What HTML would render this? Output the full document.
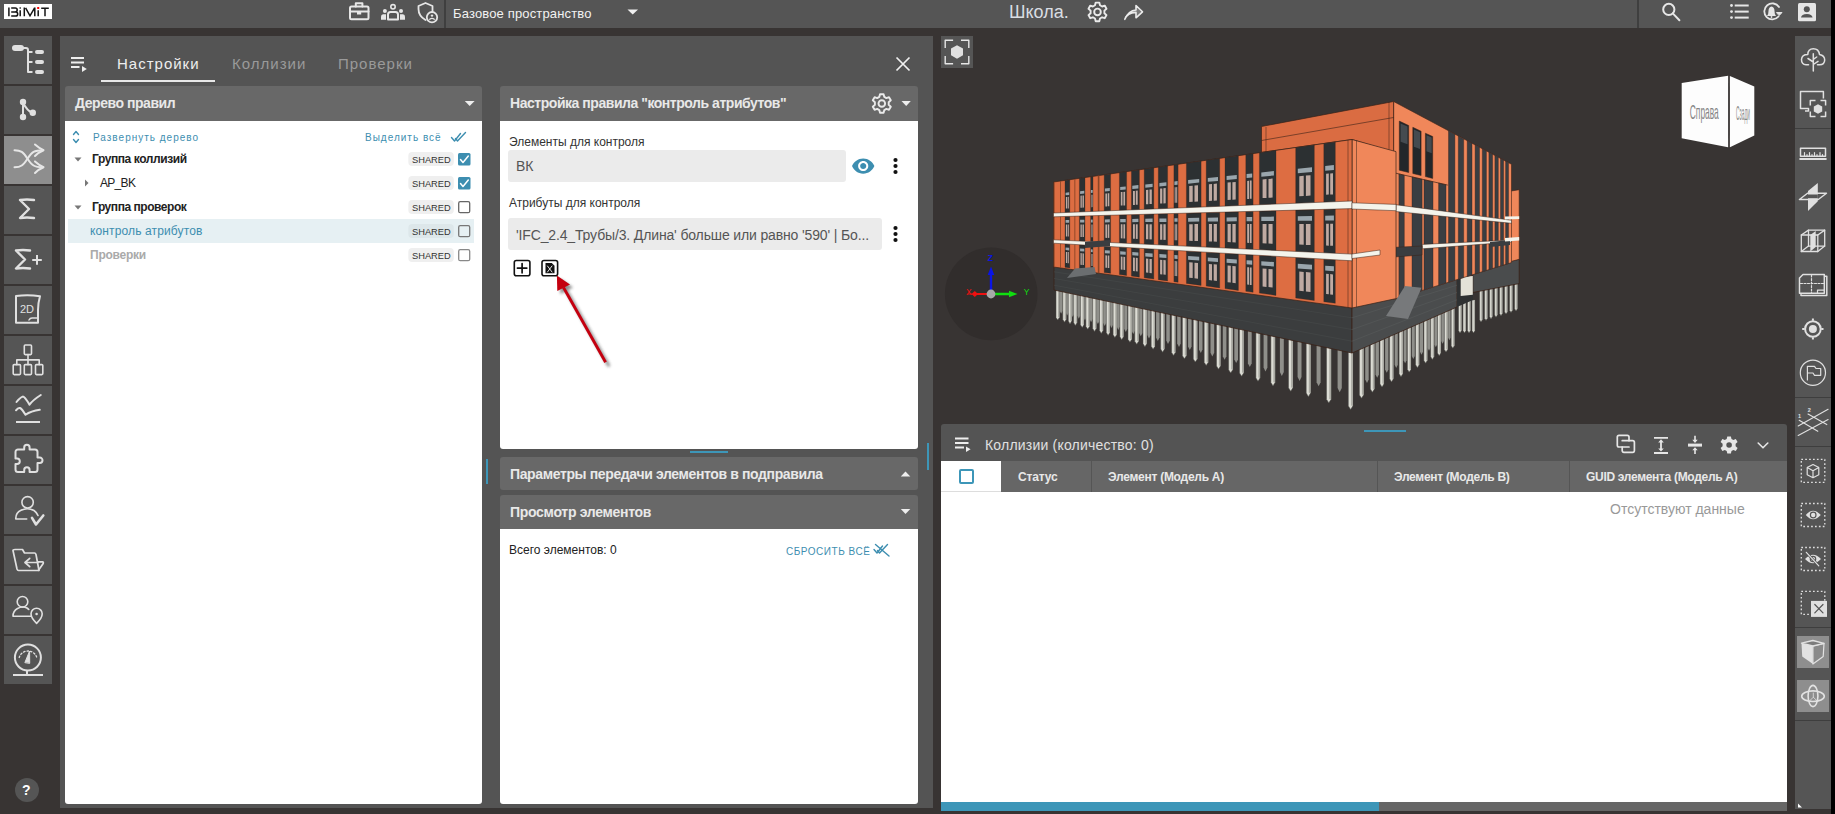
<!DOCTYPE html>
<html><head><meta charset="utf-8">
<style>
*{box-sizing:border-box;margin:0;padding:0}
html,body{width:1835px;height:814px;overflow:hidden;background:#383433;font-family:"Liberation Sans",sans-serif}
.a{position:absolute}
.t{position:absolute;white-space:nowrap;line-height:1}
svg{position:absolute;overflow:visible}
</style></head><body>
<!-- TOP BAR -->
<div class="a" style="left:0;top:0;width:1831px;height:28px;background:#555555"></div>
<div class="a" style="left:444px;top:0;width:2px;height:28px;background:#3f3f3f"></div>
<div class="a" style="left:1637px;top:0;width:2px;height:28px;background:#3f3f3f"></div>
<div class="a" style="left:4px;top:4px;width:48px;height:15px;background:#fff"></div>
<svg width="60" height="24" style="left:0;top:0" viewBox="0 0 60 24" fill="none" stroke="#151515" stroke-width="1.5" stroke-linecap="butt">
<path d="M8.9 7.5 V16.2 M11.2 8.1 H15.2 Q17.2 8.1 17.2 10 Q17.2 11.9 15.2 11.9 H11.2 M11.2 11.9 H15.6 Q17.7 11.9 17.7 14 Q17.7 16.1 15.6 16.1 H11.2 M20.2 10.2 V16.2 M24.3 7.5 V16.2 M25.6 7.8 L30 15.8 L34.6 7.8 M34.8 7.5 V16.2 M38.2 10.2 V16.2 M41.2 8.3 H48.8 M45 8.3 V16.2"/>
<rect x="19.5" y="7.3" width="1.4" height="1.4" fill="#151515" stroke="none"/>
<rect x="37.2" y="7" width="2" height="2" fill="#f00" stroke="none"/>
</svg>
<div class="t" id="tx_space" style="left:453px;top:7px;font-size:13px;color:#f2f2f2;letter-spacing:0.15px">Базовое пространство</div>
<div class="t" id="tx_school" style="left:1009px;top:3px;font-size:18px;color:#d9dde2">Школа.</div>

<!-- LEFT SIDEBAR -->
<div class="a" style="left:4px;top:36px;width:48px;height:48px;background:#555"></div>
<div class="a" style="left:4px;top:86px;width:48px;height:48px;background:#555"></div>
<div class="a" style="left:4px;top:136px;width:48px;height:48px;background:#8e8e8e"></div>
<div class="a" style="left:4px;top:186px;width:48px;height:48px;background:#555"></div>
<div class="a" style="left:4px;top:236px;width:48px;height:48px;background:#555"></div>
<div class="a" style="left:4px;top:286px;width:48px;height:48px;background:#555"></div>
<div class="a" style="left:4px;top:336px;width:48px;height:48px;background:#555"></div>
<div class="a" style="left:4px;top:386px;width:48px;height:48px;background:#555"></div>
<div class="a" style="left:4px;top:436px;width:48px;height:48px;background:#555"></div>
<div class="a" style="left:4px;top:486px;width:48px;height:48px;background:#555"></div>
<div class="a" style="left:4px;top:536px;width:48px;height:48px;background:#555"></div>
<div class="a" style="left:4px;top:586px;width:48px;height:48px;background:#555"></div>
<div class="a" style="left:4px;top:636px;width:48px;height:48px;background:#555"></div>
<div class="a" style="left:15px;top:778px;width:24px;height:24px;border-radius:50%;background:#555"></div>
<div class="t" style="left:22px;top:783px;font-size:14px;font-weight:bold;color:#fff">?</div>

<!-- MAIN PANEL -->
<div class="a" style="left:60px;top:36px;width:873px;height:772px;background:#545454"></div>
<div class="t" id="tx_tab1" style="left:117px;top:56px;font-size:15px;color:#eeeeee;letter-spacing:1px">Настройки</div>
<div class="t" id="tx_tab2" style="left:232px;top:56px;font-size:15px;color:#9a9a9a;letter-spacing:1px">Коллизии</div>
<div class="t" id="tx_tab3" style="left:338px;top:56px;font-size:15px;color:#9a9a9a;letter-spacing:1px">Проверки</div>
<div class="a" style="left:101px;top:80px;width:114px;height:2px;background:#e8e8e8"></div>

<!-- tree panel -->
<div class="a" style="left:65px;top:86px;width:417px;height:35px;background:#686868;border-radius:3px 3px 0 0"></div>
<div class="a" style="left:65px;top:121px;width:417px;height:683px;background:#fff;border-radius:0 0 3px 3px"></div>
<div class="t" id="tx_tree" style="left:75px;top:96px;font-size:14px;font-weight:bold;color:#e8e8e8;letter-spacing:-0.45px">Дерево правил</div>
<div class="t" id="tx_expand" style="left:93px;top:133px;font-size:10px;color:#3d8eb0;letter-spacing:1px">Развернуть дерево</div>
<div class="t" id="tx_selall" style="left:365px;top:133px;font-size:10px;color:#3d8eb0;letter-spacing:1px">Выделить всё</div>
<div class="a" style="left:68px;top:219px;width:406px;height:24px;background:#e6f0f3"></div>
<div class="t" id="tx_g1" style="left:92px;top:153px;font-size:12px;font-weight:bold;color:#222;letter-spacing:-0.42px">Группа коллизий</div>
<div class="t" id="tx_apbk" style="left:100px;top:177px;font-size:12px;color:#222;letter-spacing:-0.7px">AP_BK</div>
<div class="t" id="tx_g2" style="left:92px;top:201px;font-size:12px;font-weight:bold;color:#222;letter-spacing:-0.45px">Группа проверок</div>
<div class="t" id="tx_ctrl" style="left:90px;top:225px;font-size:12px;color:#3d8eb0;letter-spacing:0.13px">контроль атрибутов</div>
<div class="t" id="tx_prov" style="left:90px;top:249px;font-size:12px;font-weight:bold;color:#aaa;letter-spacing:-0.25px">Проверки</div>

<!-- middle panel -->
<div class="a" style="left:500px;top:86px;width:418px;height:35px;background:#686868;border-radius:3px 3px 0 0"></div>
<div class="a" style="left:500px;top:121px;width:418px;height:328px;background:#fff;border-radius:0 0 3px 3px"></div>
<div class="t" id="tx_rule" style="left:510px;top:96px;font-size:14px;font-weight:bold;color:#e8e8e8;letter-spacing:-0.46px">Настройка правила "контроль атрибутов"</div>
<div class="t" id="tx_el" style="left:509px;top:136px;font-size:12px;color:#333">Элементы для контроля</div>
<div class="a" style="left:508px;top:150px;width:338px;height:32px;background:#ebebeb;border-radius:3px"></div>
<div class="t" id="tx_vk" style="left:516px;top:159px;font-size:14px;color:#555">ВК</div>
<div class="t" id="tx_attr" style="left:509px;top:197px;font-size:12px;color:#333">Атрибуты для контроля</div>
<div class="a" style="left:508px;top:218px;width:374px;height:32px;background:#ebebeb;border-radius:3px"></div>
<div class="t" id="tx_ifc" style="left:516px;top:228px;font-size:14px;color:#555;letter-spacing:-0.14px">'IFC_2.4_Трубы/3. Длина' больше или равно '590' | Бо...</div>

<div class="a" style="left:500px;top:457px;width:418px;height:33px;background:#686868;border-radius:3px"></div>
<div class="t" id="tx_param" style="left:510px;top:467px;font-size:14px;font-weight:bold;color:#e8e8e8;letter-spacing:-0.37px">Параметры передачи элементов в подправила</div>
<div class="a" style="left:500px;top:495px;width:418px;height:34px;background:#686868;border-radius:3px 3px 0 0"></div>
<div class="t" id="tx_view" style="left:510px;top:505px;font-size:14px;font-weight:bold;color:#e8e8e8;letter-spacing:-0.3px">Просмотр элементов</div>
<div class="a" style="left:500px;top:529px;width:418px;height:275px;background:#fff;border-radius:0 0 3px 3px"></div>
<div class="t" id="tx_total" style="left:509px;top:544px;font-size:12px;color:#222">Всего элементов: 0</div>
<div class="t" id="tx_reset" style="left:786px;top:547px;font-size:10px;color:#3d8eb0;letter-spacing:0.52px">СБРОСИТЬ ВСЁ</div>
<div class="a" style="left:690px;top:451px;width:38px;height:2px;background:#3d96b8"></div>
<div class="a" style="left:486px;top:459px;width:2px;height:25px;background:#3d96b8"></div>
<div class="a" style="left:927px;top:443px;width:2px;height:27px;background:#3d96b8"></div>

<!-- 3D view button -->
<div class="a" style="left:941px;top:36px;width:32px;height:32px;background:#555"></div>

<!-- BUILDING -->
<svg width="1835" height="814" style="left:0;top:0" viewBox="0 0 1835 814"><path d="M1059.6 287.5 V310.7 L1061.1 313.8 L1062.6 310.7 V287.5 Z" fill="#8f8f8a"/><path d="M1065.7 288.8 V312.4 L1067.2 315.5 L1068.8 312.4 V288.8 Z" fill="#8f8f8a"/><path d="M1071.2 290.0 V313.9 L1072.7 317.0 L1074.2 313.9 V290.0 Z" fill="#8f8f8a"/><path d="M1077.3 291.2 V315.6 L1078.8 318.7 L1080.3 315.6 V291.2 Z" fill="#8f8f8a"/><path d="M1083.4 292.5 V317.3 L1085.0 320.5 L1086.5 317.3 V292.5 Z" fill="#8f8f8a"/><path d="M1089.5 293.8 V319.1 L1091.1 322.2 L1092.7 319.1 V293.8 Z" fill="#8f8f8a"/><path d="M1096.3 295.3 V320.9 L1097.9 324.1 L1099.5 320.9 V295.3 Z" fill="#8f8f8a"/><path d="M1103.1 296.7 V322.8 L1104.7 326.0 L1106.3 322.8 V296.7 Z" fill="#8f8f8a"/><path d="M1109.9 298.2 V324.7 L1111.5 328.0 L1113.1 324.7 V298.2 Z" fill="#8f8f8a"/><path d="M1116.7 299.6 V326.6 L1118.3 329.9 L1119.9 326.6 V299.6 Z" fill="#8f8f8a"/><path d="M1124.2 301.2 V328.7 L1125.8 332.0 L1127.4 328.7 V301.2 Z" fill="#8f8f8a"/><path d="M1131.6 302.8 V330.8 L1133.3 334.1 L1135.0 330.8 V302.8 Z" fill="#8f8f8a"/><path d="M1139.1 304.4 V332.9 L1140.8 336.2 L1142.5 332.9 V304.4 Z" fill="#8f8f8a"/><path d="M1147.3 306.1 V335.1 L1149.0 338.5 L1150.7 335.1 V306.1 Z" fill="#8f8f8a"/><path d="M1156.1 308.0 V337.6 L1157.8 341.0 L1159.6 337.6 V308.0 Z" fill="#8f8f8a"/><path d="M1166.3 310.1 V340.4 L1168.0 343.9 L1169.8 340.4 V310.1 Z" fill="#8f8f8a"/><path d="M1177.2 312.4 V343.5 L1179.0 347.0 L1180.7 343.5 V312.4 Z" fill="#8f8f8a"/><path d="M1188.1 314.7 V346.5 L1189.8 350.0 L1191.6 346.5 V314.7 Z" fill="#8f8f8a"/><path d="M1199.0 317.0 V349.5 L1200.8 353.1 L1202.5 349.5 V317.0 Z" fill="#8f8f8a"/><path d="M1210.5 319.5 V352.7 L1212.3 356.4 L1214.2 352.7 V319.5 Z" fill="#8f8f8a"/><path d="M1222.8 322.1 V356.2 L1224.6 359.8 L1226.4 356.2 V322.1 Z" fill="#8f8f8a"/><path d="M1234.3 324.5 V359.4 L1236.2 363.1 L1238.0 359.4 V324.5 Z" fill="#8f8f8a"/><path d="M1247.9 327.4 V363.2 L1249.8 366.9 L1251.7 363.2 V327.4 Z" fill="#8f8f8a"/><path d="M1263.6 330.7 V367.5 L1265.5 371.4 L1267.4 367.5 V330.7 Z" fill="#8f8f8a"/><path d="M1279.9 334.2 V372.1 L1281.8 376.0 L1283.8 372.1 V334.2 Z" fill="#8f8f8a"/><path d="M1297.6 337.9 V377.0 L1299.6 381.0 L1301.5 377.0 V337.9 Z" fill="#8f8f8a"/><path d="M1316.6 341.9 V382.3 L1318.6 386.3 L1320.6 382.3 V341.9 Z" fill="#8f8f8a"/><path d="M1337.6 346.4 V388.1 L1339.7 392.3 L1341.8 388.1 V346.4 Z" fill="#8f8f8a"/><path d="M1056.0 288.8 V317.4 L1057.7 320.1 L1059.4 317.4 V288.8 Z" fill="#dcdcd4" stroke="#4a4a46" stroke-width="0.5"/><path d="M1058.0 288.8 V317.1 L1059.4 317.4 V288.8 Z" fill="#a9a9a2"/><path d="M1062.8 290.2 V319.5 L1064.5 322.2 L1066.2 319.5 V290.2 Z" fill="#dcdcd4" stroke="#4a4a46" stroke-width="0.5"/><path d="M1064.8 290.2 V319.1 L1066.2 319.5 V290.2 Z" fill="#a9a9a2"/><path d="M1068.3 291.4 V321.1 L1070.0 323.9 L1071.7 321.1 V291.4 Z" fill="#dcdcd4" stroke="#4a4a46" stroke-width="0.5"/><path d="M1070.3 291.4 V320.8 L1071.7 321.1 V291.4 Z" fill="#a9a9a2"/><path d="M1073.7 292.5 V322.7 L1075.4 325.5 L1077.1 322.7 V292.5 Z" fill="#dcdcd4" stroke="#4a4a46" stroke-width="0.5"/><path d="M1075.7 292.5 V322.4 L1077.1 322.7 V292.5 Z" fill="#a9a9a2"/><path d="M1080.4 294.0 V324.8 L1082.2 327.6 L1084.0 324.8 V294.0 Z" fill="#dcdcd4" stroke="#4a4a46" stroke-width="0.5"/><path d="M1082.6 294.0 V324.4 L1084.0 324.8 V294.0 Z" fill="#a9a9a2"/><path d="M1085.9 295.1 V326.5 L1087.7 329.3 L1089.5 326.5 V295.1 Z" fill="#dcdcd4" stroke="#4a4a46" stroke-width="0.5"/><path d="M1088.1 295.1 V326.1 L1089.5 326.5 V295.1 Z" fill="#a9a9a2"/><path d="M1092.7 296.6 V328.5 L1094.5 331.4 L1096.3 328.5 V296.6 Z" fill="#dcdcd4" stroke="#4a4a46" stroke-width="0.5"/><path d="M1094.9 296.6 V328.2 L1096.3 328.5 V296.6 Z" fill="#a9a9a2"/><path d="M1099.5 298.0 V330.6 L1101.3 333.4 L1103.1 330.6 V298.0 Z" fill="#dcdcd4" stroke="#4a4a46" stroke-width="0.5"/><path d="M1101.7 298.0 V330.2 L1103.1 330.6 V298.0 Z" fill="#a9a9a2"/><path d="M1106.3 299.4 V332.6 L1108.1 335.5 L1109.9 332.6 V299.4 Z" fill="#dcdcd4" stroke="#4a4a46" stroke-width="0.5"/><path d="M1108.5 299.4 V332.3 L1109.9 332.6 V299.4 Z" fill="#a9a9a2"/><path d="M1113.1 300.9 V334.7 L1114.9 337.6 L1116.7 334.7 V300.9 Z" fill="#dcdcd4" stroke="#4a4a46" stroke-width="0.5"/><path d="M1115.3 300.9 V334.3 L1116.7 334.7 V300.9 Z" fill="#a9a9a2"/><path d="M1119.9 302.3 V336.7 L1121.7 339.7 L1123.5 336.7 V302.3 Z" fill="#dcdcd4" stroke="#4a4a46" stroke-width="0.5"/><path d="M1122.1 302.3 V336.4 L1123.5 336.7 V302.3 Z" fill="#a9a9a2"/><path d="M1128.0 304.0 V339.2 L1129.9 342.2 L1131.8 339.2 V304.0 Z" fill="#dcdcd4" stroke="#4a4a46" stroke-width="0.5"/><path d="M1130.3 304.0 V338.8 L1131.8 339.2 V304.0 Z" fill="#a9a9a2"/><path d="M1134.8 305.5 V341.3 L1136.7 344.3 L1138.6 341.3 V305.5 Z" fill="#dcdcd4" stroke="#4a4a46" stroke-width="0.5"/><path d="M1137.1 305.5 V340.9 L1138.6 341.3 V305.5 Z" fill="#a9a9a2"/><path d="M1143.0 307.2 V343.7 L1144.9 346.8 L1146.8 343.7 V307.2 Z" fill="#dcdcd4" stroke="#4a4a46" stroke-width="0.5"/><path d="M1145.3 307.2 V343.4 L1146.8 343.7 V307.2 Z" fill="#a9a9a2"/><path d="M1151.2 309.0 V346.2 L1153.1 349.3 L1155.0 346.2 V309.0 Z" fill="#dcdcd4" stroke="#4a4a46" stroke-width="0.5"/><path d="M1153.5 309.0 V345.8 L1155.0 346.2 V309.0 Z" fill="#a9a9a2"/><path d="M1160.7 311.0 V349.1 L1162.6 352.2 L1164.5 349.1 V311.0 Z" fill="#dcdcd4" stroke="#4a4a46" stroke-width="0.5"/><path d="M1163.0 311.0 V348.7 L1164.5 349.1 V311.0 Z" fill="#a9a9a2"/><path d="M1171.6 313.3 V352.4 L1173.5 355.5 L1175.4 352.4 V313.3 Z" fill="#dcdcd4" stroke="#4a4a46" stroke-width="0.5"/><path d="M1173.9 313.3 V352.0 L1175.4 352.4 V313.3 Z" fill="#a9a9a2"/><path d="M1182.4 315.6 V355.7 L1184.4 358.8 L1186.4 355.7 V315.6 Z" fill="#dcdcd4" stroke="#4a4a46" stroke-width="0.5"/><path d="M1184.8 315.6 V355.3 L1186.4 355.7 V315.6 Z" fill="#a9a9a2"/><path d="M1193.3 317.9 V359.0 L1195.3 362.1 L1197.3 359.0 V317.9 Z" fill="#dcdcd4" stroke="#4a4a46" stroke-width="0.5"/><path d="M1195.7 317.9 V358.6 L1197.3 359.0 V317.9 Z" fill="#a9a9a2"/><path d="M1204.2 320.2 V362.3 L1206.2 365.5 L1208.2 362.3 V320.2 Z" fill="#dcdcd4" stroke="#4a4a46" stroke-width="0.5"/><path d="M1206.6 320.2 V361.9 L1208.2 362.3 V320.2 Z" fill="#a9a9a2"/><path d="M1216.5 322.8 V366.0 L1218.5 369.2 L1220.5 366.0 V322.8 Z" fill="#dcdcd4" stroke="#4a4a46" stroke-width="0.5"/><path d="M1218.9 322.8 V365.6 L1220.5 366.0 V322.8 Z" fill="#a9a9a2"/><path d="M1228.6 325.4 V369.7 L1230.7 373.0 L1232.8 369.7 V325.4 Z" fill="#dcdcd4" stroke="#4a4a46" stroke-width="0.5"/><path d="M1231.1 325.4 V369.3 L1232.8 369.7 V325.4 Z" fill="#a9a9a2"/><path d="M1239.5 327.7 V373.0 L1241.6 376.3 L1243.7 373.0 V327.7 Z" fill="#dcdcd4" stroke="#4a4a46" stroke-width="0.5"/><path d="M1242.0 327.7 V372.5 L1243.7 373.0 V327.7 Z" fill="#a9a9a2"/><path d="M1255.9 331.1 V377.9 L1258.0 381.3 L1260.1 377.9 V331.1 Z" fill="#dcdcd4" stroke="#4a4a46" stroke-width="0.5"/><path d="M1258.4 331.1 V377.5 L1260.1 377.9 V331.1 Z" fill="#a9a9a2"/><path d="M1270.9 334.3 V382.5 L1273.0 385.9 L1275.1 382.5 V334.3 Z" fill="#dcdcd4" stroke="#4a4a46" stroke-width="0.5"/><path d="M1273.4 334.3 V382.0 L1275.1 382.5 V334.3 Z" fill="#a9a9a2"/><path d="M1288.5 338.0 V387.8 L1290.7 391.3 L1292.9 387.8 V338.0 Z" fill="#dcdcd4" stroke="#4a4a46" stroke-width="0.5"/><path d="M1291.1 338.0 V387.4 L1292.9 387.8 V338.0 Z" fill="#a9a9a2"/><path d="M1306.2 341.8 V393.1 L1308.4 396.7 L1310.6 393.1 V341.8 Z" fill="#dcdcd4" stroke="#4a4a46" stroke-width="0.5"/><path d="M1308.8 341.8 V392.7 L1310.6 393.1 V341.8 Z" fill="#a9a9a2"/><path d="M1326.5 346.1 V399.3 L1328.8 402.9 L1331.1 399.3 V346.1 Z" fill="#dcdcd4" stroke="#4a4a46" stroke-width="0.5"/><path d="M1329.3 346.1 V398.9 L1331.1 399.3 V346.1 Z" fill="#a9a9a2"/><path d="M1348.3 350.7 V405.9 L1350.6 409.6 L1352.9 405.9 V350.7 Z" fill="#dcdcd4" stroke="#4a4a46" stroke-width="0.5"/><path d="M1351.1 350.7 V405.4 L1352.9 405.9 V350.7 Z" fill="#a9a9a2"/><path d="M1365.2 342.5 V379.6 L1367.0 383.1 L1368.7 379.6 V342.5 Z" fill="#8f8f8a"/><path d="M1375.5 338.0 V374.4 L1377.2 377.8 L1378.9 374.4 V338.0 Z" fill="#8f8f8a"/><path d="M1385.1 333.8 V369.5 L1386.8 372.8 L1388.4 369.5 V333.8 Z" fill="#8f8f8a"/><path d="M1394.7 329.6 V364.7 L1396.2 367.9 L1397.8 364.7 V329.6 Z" fill="#8f8f8a"/><path d="M1403.6 325.7 V360.2 L1405.1 363.3 L1406.6 360.2 V325.7 Z" fill="#8f8f8a"/><path d="M1411.8 322.1 V356.0 L1413.3 359.0 L1414.8 356.0 V322.1 Z" fill="#8f8f8a"/><path d="M1420.0 318.6 V351.8 L1421.5 354.7 L1423.0 351.8 V318.6 Z" fill="#8f8f8a"/><path d="M1427.6 315.3 V347.9 L1429.0 350.8 L1430.4 347.9 V315.3 Z" fill="#8f8f8a"/><path d="M1434.4 312.3 V344.5 L1435.8 347.3 L1437.2 344.5 V312.3 Z" fill="#8f8f8a"/><path d="M1441.2 309.3 V341.0 L1442.6 343.7 L1444.0 341.0 V309.3 Z" fill="#8f8f8a"/><path d="M1448.1 306.3 V337.5 L1449.4 340.2 L1450.7 337.5 V306.3 Z" fill="#8f8f8a"/><path d="M1359.4 346.8 V395.0 L1361.5 398.3 L1363.6 395.0 V346.8 Z" fill="#dcdcd4" stroke="#4a4a46" stroke-width="0.5"/><path d="M1361.9 346.8 V394.6 L1363.6 395.0 V346.8 Z" fill="#a9a9a2"/><path d="M1370.4 342.1 V389.1 L1372.4 392.3 L1374.4 389.1 V342.1 Z" fill="#dcdcd4" stroke="#4a4a46" stroke-width="0.5"/><path d="M1372.8 342.1 V388.7 L1374.4 389.1 V342.1 Z" fill="#a9a9a2"/><path d="M1380.0 337.9 V383.9 L1382.0 387.1 L1384.0 383.9 V337.9 Z" fill="#dcdcd4" stroke="#4a4a46" stroke-width="0.5"/><path d="M1382.4 337.9 V383.5 L1384.0 383.9 V337.9 Z" fill="#a9a9a2"/><path d="M1389.6 333.7 V378.8 L1391.5 381.9 L1393.4 378.8 V333.7 Z" fill="#dcdcd4" stroke="#4a4a46" stroke-width="0.5"/><path d="M1391.9 333.7 V378.4 L1393.4 378.8 V333.7 Z" fill="#a9a9a2"/><path d="M1399.1 329.5 V373.7 L1401.0 376.7 L1402.9 373.7 V329.5 Z" fill="#dcdcd4" stroke="#4a4a46" stroke-width="0.5"/><path d="M1401.4 329.5 V373.3 L1402.9 373.7 V329.5 Z" fill="#a9a9a2"/><path d="M1407.4 325.9 V369.3 L1409.2 372.2 L1411.0 369.3 V325.9 Z" fill="#dcdcd4" stroke="#4a4a46" stroke-width="0.5"/><path d="M1409.6 325.9 V368.9 L1411.0 369.3 V325.9 Z" fill="#a9a9a2"/><path d="M1415.6 322.3 V364.8 L1417.4 367.7 L1419.2 364.8 V322.3 Z" fill="#dcdcd4" stroke="#4a4a46" stroke-width="0.5"/><path d="M1417.8 322.3 V364.5 L1419.2 364.8 V322.3 Z" fill="#a9a9a2"/><path d="M1423.9 318.8 V360.4 L1425.6 363.2 L1427.3 360.4 V318.8 Z" fill="#dcdcd4" stroke="#4a4a46" stroke-width="0.5"/><path d="M1425.9 318.8 V360.0 L1427.3 360.4 V318.8 Z" fill="#a9a9a2"/><path d="M1430.7 315.8 V356.7 L1432.4 359.5 L1434.1 356.7 V315.8 Z" fill="#dcdcd4" stroke="#4a4a46" stroke-width="0.5"/><path d="M1432.7 315.8 V356.4 L1434.1 356.7 V315.8 Z" fill="#a9a9a2"/><path d="M1437.5 312.8 V353.1 L1439.2 355.7 L1440.9 353.1 V312.8 Z" fill="#dcdcd4" stroke="#4a4a46" stroke-width="0.5"/><path d="M1439.5 312.8 V352.7 L1440.9 353.1 V312.8 Z" fill="#a9a9a2"/><path d="M1444.3 309.8 V349.4 L1446.0 352.0 L1447.7 349.4 V309.8 Z" fill="#dcdcd4" stroke="#4a4a46" stroke-width="0.5"/><path d="M1446.3 309.8 V349.0 L1447.7 349.4 V309.8 Z" fill="#a9a9a2"/><path d="M1451.2 306.8 V345.7 L1452.8 348.3 L1454.4 345.7 V306.8 Z" fill="#dcdcd4" stroke="#4a4a46" stroke-width="0.5"/><path d="M1453.1 306.8 V345.4 L1454.4 345.7 V306.8 Z" fill="#a9a9a2"/><path d="M1458.5 300.0 V330.6 L1460.0 333.0 L1461.5 330.6 V300.0 Z" fill="#dcdcd4" stroke="#4a4a46" stroke-width="0.5"/><path d="M1460.3 300.0 V330.3 L1461.5 330.6 V300.0 Z" fill="#a9a9a2"/><path d="M1463.0 300.0 V330.6 L1464.5 333.0 L1466.0 330.6 V300.0 Z" fill="#dcdcd4" stroke="#4a4a46" stroke-width="0.5"/><path d="M1464.8 300.0 V330.3 L1466.0 330.6 V300.0 Z" fill="#a9a9a2"/><path d="M1467.5 300.0 V330.6 L1469.0 333.0 L1470.5 330.6 V300.0 Z" fill="#dcdcd4" stroke="#4a4a46" stroke-width="0.5"/><path d="M1469.3 300.0 V330.3 L1470.5 330.6 V300.0 Z" fill="#a9a9a2"/><path d="M1472.0 300.0 V330.6 L1473.5 333.0 L1475.0 330.6 V300.0 Z" fill="#dcdcd4" stroke="#4a4a46" stroke-width="0.5"/><path d="M1473.8 300.0 V330.3 L1475.0 330.6 V300.0 Z" fill="#a9a9a2"/><path d="M1479.6 290.0 V319.8 L1481.0 322.0 L1482.4 319.8 V290.0 Z" fill="#dcdcd4" stroke="#4a4a46" stroke-width="0.5"/><path d="M1481.3 290.0 V319.5 L1482.4 319.8 V290.0 Z" fill="#a9a9a2"/><path d="M1484.6 288.9 V318.2 L1486.0 320.4 L1487.4 318.2 V288.9 Z" fill="#dcdcd4" stroke="#4a4a46" stroke-width="0.5"/><path d="M1486.3 288.9 V317.9 L1487.4 318.2 V288.9 Z" fill="#a9a9a2"/><path d="M1489.6 287.7 V316.6 L1491.0 318.9 L1492.4 316.6 V287.7 Z" fill="#dcdcd4" stroke="#4a4a46" stroke-width="0.5"/><path d="M1491.3 287.7 V316.3 L1492.4 316.6 V287.7 Z" fill="#a9a9a2"/><path d="M1494.6 286.6 V315.0 L1496.0 317.3 L1497.4 315.0 V286.6 Z" fill="#dcdcd4" stroke="#4a4a46" stroke-width="0.5"/><path d="M1496.3 286.6 V314.8 L1497.4 315.0 V286.6 Z" fill="#a9a9a2"/><path d="M1499.6 285.4 V313.5 L1501.0 315.7 L1502.4 313.5 V285.4 Z" fill="#dcdcd4" stroke="#4a4a46" stroke-width="0.5"/><path d="M1501.3 285.4 V313.2 L1502.4 313.5 V285.4 Z" fill="#a9a9a2"/><path d="M1504.6 284.3 V311.9 L1506.0 314.1 L1507.4 311.9 V284.3 Z" fill="#dcdcd4" stroke="#4a4a46" stroke-width="0.5"/><path d="M1506.3 284.3 V311.6 L1507.4 311.9 V284.3 Z" fill="#a9a9a2"/><path d="M1509.6 283.1 V310.3 L1511.0 312.6 L1512.4 310.3 V283.1 Z" fill="#dcdcd4" stroke="#4a4a46" stroke-width="0.5"/><path d="M1511.3 283.1 V310.1 L1512.4 310.3 V283.1 Z" fill="#a9a9a2"/><path d="M1514.6 282.0 V308.8 L1516.0 311.0 L1517.4 308.8 V282.0 Z" fill="#dcdcd4" stroke="#4a4a46" stroke-width="0.5"/><path d="M1516.3 282.0 V308.5 L1517.4 308.8 V282.0 Z" fill="#a9a9a2"/><polygon points="1054.0,265.0 1352.0,306.0 1352.0,353.0 1054.0,290.0" fill="#3b3d3e" stroke="#3a2218" stroke-width="0.8"/><polygon points="1352.0,306.0 1457.0,278.0 1457.0,307.0 1352.0,353.0" fill="#4a4c4d" stroke="#3a2218" stroke-width="0.8"/><line x1="1054.0" y1="271.8" x2="1352.0" y2="317.8" stroke="#47494a" stroke-width="0.6"/><line x1="1352.0" y1="317.8" x2="1457.0" y2="285.2" stroke="#575a5b" stroke-width="0.6"/><line x1="1054.0" y1="278.5" x2="1352.0" y2="329.5" stroke="#47494a" stroke-width="0.6"/><line x1="1352.0" y1="329.5" x2="1457.0" y2="292.5" stroke="#575a5b" stroke-width="0.6"/><line x1="1054.0" y1="285.2" x2="1352.0" y2="341.2" stroke="#47494a" stroke-width="0.6"/><line x1="1352.0" y1="341.2" x2="1457.0" y2="299.8" stroke="#575a5b" stroke-width="0.6"/><polygon points="1457.0,278.0 1473.0,276.0 1473.0,300.0 1457.0,307.0" fill="#2f3132"/><polygon points="1472.8,268.0 1519.2,259.3 1519.2,283.6 1472.8,292.5" fill="#4a4c4d" stroke="#3a2218" stroke-width="0.8"/><polygon points="1460.7,277.0 1472.8,276.0 1472.8,294.7 1460.7,296.0" fill="#e4e2d8"/><polygon points="1505.0,192.0 1519.2,189.7 1519.2,259.3 1505.0,263.0" fill="#f0875a" stroke="#3a2218" stroke-width="0.6"/><polygon points="1393.6,101.5 1511.5,164.3 1511.5,262.6 1393.6,299.4" fill="#f0875a" stroke="#3a2218" stroke-width="0.6"/><polygon points="1398.9,173.9 1404.3,175.2 1404.3,296.0 1398.9,297.8" fill="#3a3e42" stroke="#3a2218" stroke-width="0.4"/><polygon points="1412.0,176.9 1422.1,179.2 1422.1,290.5 1412.0,293.7" fill="#3a3e42" stroke="#3a2218" stroke-width="0.4"/><polygon points="1424.0,179.7 1433.0,181.7 1433.0,287.1 1424.0,289.9" fill="#3a3e42" stroke="#3a2218" stroke-width="0.4"/><polygon points="1438.6,183.0 1446.0,184.7 1446.0,283.0 1438.6,285.4" fill="#3a3e42" stroke="#3a2218" stroke-width="0.4"/><polygon points="1448.5,130.8 1454.9,134.2 1454.9,280.3 1448.5,282.3" fill="#3a3e42" stroke="#3a2218" stroke-width="0.4"/><polygon points="1458.3,136.0 1463.7,138.9 1463.7,277.5 1458.3,279.2" fill="#3a3e42" stroke="#3a2218" stroke-width="0.4"/><polygon points="1467.2,140.7 1472.0,143.3 1472.0,274.9 1467.2,276.4" fill="#3a3e42" stroke="#3a2218" stroke-width="0.4"/><polygon points="1475.1,144.9 1479.5,147.3 1479.5,272.6 1475.1,274.0" fill="#3a3e42" stroke="#3a2218" stroke-width="0.4"/><polygon points="1482.3,148.8 1486.4,150.9 1486.4,270.4 1482.3,271.7" fill="#3a3e42" stroke="#3a2218" stroke-width="0.4"/><polygon points="1488.9,152.3 1492.6,154.2 1492.6,268.5 1488.9,269.6" fill="#3a3e42" stroke="#3a2218" stroke-width="0.4"/><polygon points="1494.9,155.5 1498.3,157.3 1498.3,266.7 1494.9,267.8" fill="#3a3e42" stroke="#3a2218" stroke-width="0.4"/><polygon points="1500.5,158.4 1503.6,160.1 1503.6,265.1 1500.5,266.0" fill="#3a3e42" stroke="#3a2218" stroke-width="0.4"/><polygon points="1505.6,161.1 1508.5,162.7 1508.5,263.5 1505.6,264.4" fill="#3a3e42" stroke="#3a2218" stroke-width="0.4"/><polygon points="1399.3,121.1 1408.7,125.5 1408.7,172.5 1399.3,170.2" fill="#23272a" stroke="#3a2218" stroke-width="0.5"/><polygon points="1400.6,123.5 1407.5,126.6 1407.5,144.3 1400.6,141.7" fill="#454b50"/><polygon points="1412.8,127.3 1421.1,131.2 1421.1,175.5 1412.8,173.5" fill="#23272a" stroke="#3a2218" stroke-width="0.5"/><polygon points="1413.9,129.5 1420.0,132.3 1420.0,148.9 1413.9,146.7" fill="#454b50"/><polygon points="1425.4,133.2 1432.7,136.5 1432.7,178.4 1425.4,176.6" fill="#23272a" stroke="#3a2218" stroke-width="0.5"/><polygon points="1426.5,135.2 1431.7,137.6 1431.7,153.3 1426.5,151.3" fill="#454b50"/><path d="M1393.6 172.7 L1447.8 185.1" stroke="#3a2218" stroke-width="0.7"/><polygon points="1393.6,204.4 1511.5,220.3 1511.5,223.3 1393.6,211.3" fill="#f4f4ec" stroke="#3a2218" stroke-width="0.5"/><polygon points="1422.4,244.4 1511.5,240.0 1511.5,242.0 1422.4,248.8" fill="#f4f4ec" stroke="#3a2218" stroke-width="0.5"/><polygon points="1380.0,248.0 1422.0,246.0 1422.0,255.0 1380.0,258.0" fill="#3a3d40" stroke="#3a2218" stroke-width="0.5"/><polygon points="1490.0,242.0 1510.0,240.0 1510.0,245.0 1490.0,247.0" fill="#3a3d40"/><polygon points="1505.0,216.5 1519.2,216.2 1519.2,219.1 1505.0,219.5" fill="#f4f4ec"/><polygon points="1505.0,238.0 1519.2,237.0 1519.2,240.5 1505.0,241.5" fill="#f4f4ec"/><polygon points="1261.5,126.5 1393.6,101.5 1393.6,152.0 1352.0,139.5 1261.5,152.5" fill="#da6c42" stroke="#3a2218" stroke-width="0.7"/><line x1="1261.5" y1="140.5" x2="1393.6" y2="117.5" stroke="#3a2218" stroke-width="0.6"/><line x1="1266.0" y1="127.0" x2="1266.0" y2="152.0" stroke="#3a2218" stroke-width="0.5"/><line x1="1389.0" y1="102.0" x2="1389.0" y2="151.0" stroke="#3a2218" stroke-width="0.5"/><polygon points="1352.0,139.5 1396.0,151.6 1396.0,298.6 1352.0,308.0" fill="#f0875a" stroke="#3a2218" stroke-width="0.7"/><line x1="1356.5" y1="140.5" x2="1356.5" y2="307.0" stroke="#3a2218" stroke-width="0.5"/><polygon points="1053.5,182.0 1352.0,139.5 1352.0,308.0 1053.5,267.0" fill="#dd6d42" stroke="#3a2218" stroke-width="0.7"/><polygon points="1060.2,181.0 1061.0,180.9 1061.0,268.0 1060.2,267.9" fill="#8a4526"/><polygon points="1074.4,179.0 1075.3,178.9 1075.3,270.0 1074.4,269.9" fill="#8a4526"/><polygon points="1097.8,175.7 1099.4,175.5 1099.4,273.3 1097.8,273.1" fill="#8a4526"/><polygon points="1054.3,181.9 1054.9,181.8 1054.9,267.2 1054.3,267.1" fill="#8a4526"/><polygon points="1065.0,180.4 1069.8,179.7 1069.8,212.8 1065.0,213.0" fill="#2c3032" stroke="#3a2218" stroke-width="0.3"/><polygon points="1065.9,197.0 1067.1,196.9 1067.1,208.5 1065.9,208.5" fill="#bfaaa2"/><polygon points="1067.7,196.9 1068.8,196.8 1068.8,208.4 1067.7,208.5" fill="#bfaaa2"/><polygon points="1065.6,192.7 1069.2,192.3 1069.2,195.0 1065.6,195.3" fill="#9aa6ad"/><polygon points="1065.0,216.5 1069.8,216.4 1069.8,241.0 1065.0,240.8" fill="#2c3032" stroke="#3a2218" stroke-width="0.3"/><polygon points="1065.9,224.5 1067.1,224.5 1067.1,236.5 1065.9,236.4" fill="#bfaaa2"/><polygon points="1067.7,224.5 1068.8,224.5 1068.8,236.5 1067.7,236.5" fill="#bfaaa2"/><polygon points="1065.6,220.1 1069.2,220.0 1069.2,222.7 1065.6,222.7" fill="#9aa6ad"/><polygon points="1065.0,243.9 1069.8,244.2 1069.8,267.9 1065.0,267.3" fill="#2c3032" stroke="#3a2218" stroke-width="0.3"/><polygon points="1065.9,251.9 1067.1,252.0 1067.1,263.1 1065.9,263.0" fill="#bfaaa2"/><polygon points="1067.7,252.0 1068.8,252.1 1068.8,263.3 1067.7,263.2" fill="#bfaaa2"/><polygon points="1065.6,247.4 1069.2,247.7 1069.2,250.4 1065.6,250.1" fill="#9aa6ad"/><polygon points="1079.4,178.3 1085.0,177.5 1085.0,212.2 1079.4,212.4" fill="#2c3032" stroke="#3a2218" stroke-width="0.3"/><polygon points="1080.5,195.7 1081.8,195.6 1081.8,207.7 1080.5,207.8" fill="#bfaaa2"/><polygon points="1082.5,195.6 1083.9,195.4 1083.9,207.6 1082.5,207.7" fill="#bfaaa2"/><polygon points="1080.1,191.2 1084.3,190.7 1084.3,193.5 1080.1,193.9" fill="#9aa6ad"/><polygon points="1079.4,216.1 1085.0,216.0 1085.0,241.8 1079.4,241.5" fill="#2c3032" stroke="#3a2218" stroke-width="0.3"/><polygon points="1080.5,224.4 1081.8,224.4 1081.8,237.0 1080.5,236.9" fill="#bfaaa2"/><polygon points="1082.5,224.4 1083.9,224.4 1083.9,237.0 1082.5,237.0" fill="#bfaaa2"/><polygon points="1080.1,219.8 1084.3,219.7 1084.3,222.6 1080.1,222.6" fill="#9aa6ad"/><polygon points="1079.4,244.7 1085.0,245.1 1085.0,269.9 1079.4,269.2" fill="#2c3032" stroke="#3a2218" stroke-width="0.3"/><polygon points="1080.5,253.1 1081.8,253.2 1081.8,264.9 1080.5,264.7" fill="#bfaaa2"/><polygon points="1082.5,253.3 1083.9,253.4 1083.9,265.1 1082.5,264.9" fill="#bfaaa2"/><polygon points="1080.1,248.5 1084.3,248.8 1084.3,251.6 1080.1,251.2" fill="#9aa6ad"/><polygon points="1090.6,176.7 1093.0,176.4 1093.0,211.9 1090.6,212.0" fill="#2c3032" stroke="#3a2218" stroke-width="0.3"/><polygon points="1091.1,194.8 1091.6,194.7 1091.6,207.2 1091.1,207.2" fill="#bfaaa2"/><polygon points="1091.9,194.7 1092.5,194.7 1092.5,207.1 1091.9,207.2" fill="#bfaaa2"/><polygon points="1090.9,190.0 1092.7,189.9 1092.7,192.7 1090.9,192.9" fill="#9aa6ad"/><polygon points="1090.6,215.8 1093.0,215.8 1093.0,242.2 1090.6,242.1" fill="#2c3032" stroke="#3a2218" stroke-width="0.3"/><polygon points="1091.1,224.4 1091.6,224.4 1091.6,237.3 1091.1,237.3" fill="#bfaaa2"/><polygon points="1091.9,224.4 1092.5,224.4 1092.5,237.3 1091.9,237.3" fill="#bfaaa2"/><polygon points="1090.9,219.6 1092.7,219.6 1092.7,222.5 1090.9,222.5" fill="#9aa6ad"/><polygon points="1090.6,245.4 1093.0,245.5 1093.0,271.0 1090.6,270.7" fill="#2c3032" stroke="#3a2218" stroke-width="0.3"/><polygon points="1091.1,254.0 1091.6,254.1 1091.6,266.0 1091.1,266.0" fill="#bfaaa2"/><polygon points="1091.9,254.1 1092.5,254.1 1092.5,266.1 1091.9,266.1" fill="#bfaaa2"/><polygon points="1090.9,249.2 1092.7,249.4 1092.7,252.2 1090.9,252.1" fill="#9aa6ad"/><polygon points="1104.2,174.8 1110.6,173.9 1110.6,211.2 1104.2,211.5" fill="#2c3032" stroke="#3a2218" stroke-width="0.3"/><polygon points="1105.4,193.5 1107.0,193.4 1107.0,206.4 1105.4,206.5" fill="#bfaaa2"/><polygon points="1107.7,193.3 1109.3,193.2 1109.3,206.3 1107.7,206.3" fill="#bfaaa2"/><polygon points="1104.9,188.6 1109.8,188.1 1109.8,191.1 1104.9,191.6" fill="#9aa6ad"/><polygon points="1104.2,215.4 1110.6,215.3 1110.6,243.0 1104.2,242.7" fill="#2c3032" stroke="#3a2218" stroke-width="0.3"/><polygon points="1105.4,224.4 1107.0,224.4 1107.0,237.9 1105.4,237.8" fill="#bfaaa2"/><polygon points="1107.7,224.4 1109.3,224.4 1109.3,237.9 1107.7,237.9" fill="#bfaaa2"/><polygon points="1104.9,219.4 1109.8,219.3 1109.8,222.3 1104.9,222.4" fill="#9aa6ad"/><polygon points="1104.2,246.2 1110.6,246.6 1110.6,273.3 1104.2,272.5" fill="#2c3032" stroke="#3a2218" stroke-width="0.3"/><polygon points="1105.4,255.2 1107.0,255.4 1107.0,267.8 1105.4,267.7" fill="#bfaaa2"/><polygon points="1107.7,255.4 1109.3,255.5 1109.3,268.1 1107.7,267.9" fill="#bfaaa2"/><polygon points="1104.9,250.2 1109.8,250.6 1109.8,253.6 1104.9,253.2" fill="#9aa6ad"/><polygon points="1119.4,172.6 1126.6,171.6 1126.6,210.6 1119.4,210.9" fill="#2c3032" stroke="#3a2218" stroke-width="0.3"/><polygon points="1120.8,192.1 1122.5,192.0 1122.5,205.6 1120.8,205.6" fill="#bfaaa2"/><polygon points="1123.4,191.9 1125.1,191.8 1125.1,205.4 1123.4,205.5" fill="#bfaaa2"/><polygon points="1120.2,187.0 1125.7,186.4 1125.7,189.6 1120.2,190.1" fill="#9aa6ad"/><polygon points="1119.4,215.0 1126.6,214.8 1126.6,243.8 1119.4,243.5" fill="#2c3032" stroke="#3a2218" stroke-width="0.3"/><polygon points="1120.8,224.3 1122.5,224.3 1122.5,238.4 1120.8,238.3" fill="#bfaaa2"/><polygon points="1123.4,224.3 1125.1,224.3 1125.1,238.5 1123.4,238.4" fill="#bfaaa2"/><polygon points="1120.2,219.1 1125.7,219.1 1125.7,222.2 1120.2,222.3" fill="#9aa6ad"/><polygon points="1119.4,247.1 1126.6,247.5 1126.6,275.5 1119.4,274.5" fill="#2c3032" stroke="#3a2218" stroke-width="0.3"/><polygon points="1120.8,256.5 1122.5,256.7 1122.5,269.7 1120.8,269.5" fill="#bfaaa2"/><polygon points="1123.4,256.7 1125.1,256.9 1125.1,270.0 1123.4,269.8" fill="#bfaaa2"/><polygon points="1120.2,251.3 1125.7,251.7 1125.7,254.8 1120.2,254.4" fill="#9aa6ad"/><polygon points="1131.4,170.9 1139.4,169.8 1139.4,210.1 1131.4,210.4" fill="#2c3032" stroke="#3a2218" stroke-width="0.3"/><polygon points="1133.0,191.1 1134.9,190.9 1134.9,204.9 1133.0,205.0" fill="#bfaaa2"/><polygon points="1135.8,190.8 1137.7,190.6 1137.7,204.7 1135.8,204.8" fill="#bfaaa2"/><polygon points="1132.3,185.8 1138.4,185.1 1138.4,188.4 1132.3,189.0" fill="#9aa6ad"/><polygon points="1131.4,214.7 1139.4,214.5 1139.4,244.5 1131.4,244.1" fill="#2c3032" stroke="#3a2218" stroke-width="0.3"/><polygon points="1133.0,224.3 1134.9,224.3 1134.9,238.8 1133.0,238.8" fill="#bfaaa2"/><polygon points="1135.8,224.3 1137.7,224.3 1137.7,238.9 1135.8,238.9" fill="#bfaaa2"/><polygon points="1132.3,218.9 1138.4,218.8 1138.4,222.1 1132.3,222.2" fill="#9aa6ad"/><polygon points="1131.4,247.8 1139.4,248.3 1139.4,277.2 1131.4,276.1" fill="#2c3032" stroke="#3a2218" stroke-width="0.3"/><polygon points="1133.0,257.5 1134.9,257.7 1134.9,271.2 1133.0,270.9" fill="#bfaaa2"/><polygon points="1135.8,257.8 1137.7,257.9 1137.7,271.5 1135.8,271.3" fill="#bfaaa2"/><polygon points="1132.3,252.1 1138.4,252.6 1138.4,255.8 1132.3,255.3" fill="#9aa6ad"/><polygon points="1144.2,169.1 1153.8,167.7 1153.8,209.6 1144.2,209.9" fill="#2c3032" stroke="#3a2218" stroke-width="0.3"/><polygon points="1146.0,189.9 1148.3,189.7 1148.3,204.2 1146.0,204.3" fill="#bfaaa2"/><polygon points="1149.5,189.6 1151.8,189.4 1151.8,204.0 1149.5,204.1" fill="#bfaaa2"/><polygon points="1145.3,184.4 1152.6,183.7 1152.6,187.1 1145.3,187.7" fill="#9aa6ad"/><polygon points="1144.2,214.3 1153.8,214.1 1153.8,245.2 1144.2,244.7" fill="#2c3032" stroke="#3a2218" stroke-width="0.3"/><polygon points="1146.0,224.3 1148.3,224.3 1148.3,239.3 1146.0,239.2" fill="#bfaaa2"/><polygon points="1149.5,224.3 1151.8,224.3 1151.8,239.4 1149.5,239.4" fill="#bfaaa2"/><polygon points="1145.3,218.7 1152.6,218.6 1152.6,222.0 1145.3,222.1" fill="#9aa6ad"/><polygon points="1144.2,248.6 1153.8,249.1 1153.8,279.1 1144.2,277.8" fill="#2c3032" stroke="#3a2218" stroke-width="0.3"/><polygon points="1146.0,258.6 1148.3,258.8 1148.3,272.8 1146.0,272.5" fill="#bfaaa2"/><polygon points="1149.5,258.9 1151.8,259.1 1151.8,273.2 1149.5,272.9" fill="#bfaaa2"/><polygon points="1145.3,253.0 1152.6,253.6 1152.6,256.9 1145.3,256.4" fill="#9aa6ad"/><polygon points="1158.3,167.1 1167.6,165.8 1167.6,209.0 1158.3,209.4" fill="#2c3032" stroke="#3a2218" stroke-width="0.3"/><polygon points="1160.1,188.6 1162.3,188.4 1162.3,203.4 1160.1,203.6" fill="#bfaaa2"/><polygon points="1163.4,188.3 1165.7,188.1 1165.7,203.3 1163.4,203.4" fill="#bfaaa2"/><polygon points="1159.4,183.0 1166.4,182.2 1166.4,185.7 1159.4,186.4" fill="#9aa6ad"/><polygon points="1158.3,213.9 1167.6,213.7 1167.6,245.8 1158.3,245.4" fill="#2c3032" stroke="#3a2218" stroke-width="0.3"/><polygon points="1160.1,224.2 1162.3,224.2 1162.3,239.8 1160.1,239.7" fill="#bfaaa2"/><polygon points="1163.4,224.2 1165.7,224.2 1165.7,239.9 1163.4,239.9" fill="#bfaaa2"/><polygon points="1159.4,218.5 1166.4,218.4 1166.4,221.9 1159.4,221.9" fill="#9aa6ad"/><polygon points="1158.3,249.4 1167.6,249.9 1167.6,280.9 1158.3,279.7" fill="#2c3032" stroke="#3a2218" stroke-width="0.3"/><polygon points="1160.1,259.8 1162.3,260.0 1162.3,274.4 1160.1,274.2" fill="#bfaaa2"/><polygon points="1163.4,260.1 1165.7,260.3 1165.7,274.8 1163.4,274.6" fill="#bfaaa2"/><polygon points="1159.4,254.0 1166.4,254.5 1166.4,258.0 1159.4,257.5" fill="#9aa6ad"/><polygon points="1173.9,164.9 1178.1,164.3 1178.1,208.6 1173.9,208.8" fill="#2c3032" stroke="#3a2218" stroke-width="0.3"/><polygon points="1174.7,187.3 1175.7,187.2 1175.7,202.7 1174.7,202.8" fill="#bfaaa2"/><polygon points="1176.2,187.2 1177.2,187.1 1177.2,202.7 1176.2,202.7" fill="#bfaaa2"/><polygon points="1174.4,181.4 1177.6,181.1 1177.6,184.7 1174.4,185.0" fill="#9aa6ad"/><polygon points="1173.9,213.5 1178.1,213.4 1178.1,246.4 1173.9,246.2" fill="#2c3032" stroke="#3a2218" stroke-width="0.3"/><polygon points="1174.7,224.2 1175.7,224.2 1175.7,240.3 1174.7,240.2" fill="#bfaaa2"/><polygon points="1176.2,224.2 1177.2,224.2 1177.2,240.3 1176.2,240.3" fill="#bfaaa2"/><polygon points="1174.4,218.3 1177.6,218.2 1177.6,221.8 1174.4,221.8" fill="#9aa6ad"/><polygon points="1173.9,250.3 1178.1,250.6 1178.1,282.3 1173.9,281.8" fill="#2c3032" stroke="#3a2218" stroke-width="0.3"/><polygon points="1174.7,261.1 1175.7,261.1 1175.7,276.0 1174.7,275.9" fill="#bfaaa2"/><polygon points="1176.2,261.2 1177.2,261.3 1177.2,276.2 1176.2,276.1" fill="#bfaaa2"/><polygon points="1174.4,255.1 1177.6,255.3 1177.6,258.9 1174.4,258.7" fill="#9aa6ad"/><polygon points="1186.4,163.1 1201.1,161.0 1201.1,207.7 1186.4,208.3" fill="#2c3032" stroke="#3a2218" stroke-width="0.3"/><polygon points="1189.2,186.0 1192.7,185.7 1192.7,201.8 1189.2,202.0" fill="#bfaaa2"/><polygon points="1194.5,185.6 1198.0,185.3 1198.0,201.6 1194.5,201.7" fill="#bfaaa2"/><polygon points="1188.1,180.0 1199.2,178.9 1199.2,182.6 1188.1,183.7" fill="#9aa6ad"/><polygon points="1186.4,213.2 1201.1,212.8 1201.1,247.5 1186.4,246.8" fill="#2c3032" stroke="#3a2218" stroke-width="0.3"/><polygon points="1189.2,224.2 1192.7,224.2 1192.7,240.9 1189.2,240.8" fill="#bfaaa2"/><polygon points="1194.5,224.1 1198.0,224.1 1198.0,241.1 1194.5,240.9" fill="#bfaaa2"/><polygon points="1188.1,218.0 1199.2,217.8 1199.2,221.6 1188.1,221.7" fill="#9aa6ad"/><polygon points="1186.4,251.0 1201.1,251.9 1201.1,285.4 1186.4,283.4" fill="#2c3032" stroke="#3a2218" stroke-width="0.3"/><polygon points="1189.2,262.3 1192.7,262.6 1192.7,278.1 1189.2,277.7" fill="#bfaaa2"/><polygon points="1194.5,262.7 1198.0,263.0 1198.0,278.7 1194.5,278.3" fill="#bfaaa2"/><polygon points="1188.1,256.1 1199.2,256.8 1199.2,260.6 1188.1,259.7" fill="#9aa6ad"/><polygon points="1206.2,160.3 1219.7,158.3 1219.7,207.0 1206.2,207.5" fill="#2c3032" stroke="#3a2218" stroke-width="0.3"/><polygon points="1208.9,184.3 1212.0,184.0 1212.0,200.8 1208.9,201.0" fill="#bfaaa2"/><polygon points="1213.7,183.9 1216.9,183.6 1216.9,200.6 1213.7,200.7" fill="#bfaaa2"/><polygon points="1207.8,178.0 1218.0,176.9 1218.0,180.9 1207.8,181.8" fill="#9aa6ad"/><polygon points="1206.2,212.6 1219.7,212.2 1219.7,248.4 1206.2,247.7" fill="#2c3032" stroke="#3a2218" stroke-width="0.3"/><polygon points="1208.9,224.1 1212.0,224.1 1212.0,241.6 1208.9,241.5" fill="#bfaaa2"/><polygon points="1213.7,224.1 1216.9,224.1 1216.9,241.7 1213.7,241.6" fill="#bfaaa2"/><polygon points="1207.8,217.7 1218.0,217.5 1218.0,221.5 1207.8,221.5" fill="#9aa6ad"/><polygon points="1206.2,252.2 1219.7,253.0 1219.7,287.9 1206.2,286.1" fill="#2c3032" stroke="#3a2218" stroke-width="0.3"/><polygon points="1208.9,263.9 1212.0,264.2 1212.0,280.4 1208.9,280.0" fill="#bfaaa2"/><polygon points="1213.7,264.3 1216.9,264.6 1216.9,280.9 1213.7,280.6" fill="#bfaaa2"/><polygon points="1207.8,257.4 1218.0,258.2 1218.0,262.1 1207.8,261.3" fill="#9aa6ad"/><polygon points="1225.0,157.6 1238.4,155.7 1238.4,206.3 1225.0,206.8" fill="#2c3032" stroke="#3a2218" stroke-width="0.3"/><polygon points="1227.6,182.6 1230.8,182.3 1230.8,199.8 1227.6,200.0" fill="#bfaaa2"/><polygon points="1232.4,182.2 1235.7,181.9 1235.7,199.6 1232.4,199.7" fill="#bfaaa2"/><polygon points="1226.6,176.0 1236.8,175.0 1236.8,179.1 1226.6,180.0" fill="#9aa6ad"/><polygon points="1225.0,212.1 1238.4,211.7 1238.4,249.3 1225.0,248.7" fill="#2c3032" stroke="#3a2218" stroke-width="0.3"/><polygon points="1227.6,224.1 1230.8,224.1 1230.8,242.2 1227.6,242.1" fill="#bfaaa2"/><polygon points="1232.4,224.1 1235.7,224.0 1235.7,242.4 1232.4,242.3" fill="#bfaaa2"/><polygon points="1226.6,217.4 1236.8,217.2 1236.8,221.3 1226.6,221.4" fill="#9aa6ad"/><polygon points="1225.0,253.3 1238.4,254.1 1238.4,290.4 1225.0,288.6" fill="#2c3032" stroke="#3a2218" stroke-width="0.3"/><polygon points="1227.6,265.5 1230.8,265.8 1230.8,282.6 1227.6,282.2" fill="#bfaaa2"/><polygon points="1232.4,265.9 1235.7,266.2 1235.7,283.2 1232.4,282.8" fill="#bfaaa2"/><polygon points="1226.6,258.8 1236.8,259.5 1236.8,263.6 1226.6,262.8" fill="#9aa6ad"/><polygon points="1245.8,154.6 1253.1,153.6 1253.1,205.7 1245.8,206.0" fill="#2c3032" stroke="#3a2218" stroke-width="0.3"/><polygon points="1247.2,180.9 1249.0,180.7 1249.0,198.9 1247.2,199.0" fill="#bfaaa2"/><polygon points="1249.8,180.6 1251.6,180.5 1251.6,198.7 1249.8,198.8" fill="#bfaaa2"/><polygon points="1246.6,174.0 1252.2,173.4 1252.2,177.6 1246.6,178.1" fill="#9aa6ad"/><polygon points="1245.8,211.5 1253.1,211.3 1253.1,250.1 1245.8,249.7" fill="#2c3032" stroke="#3a2218" stroke-width="0.3"/><polygon points="1247.2,224.0 1249.0,224.0 1249.0,242.9 1247.2,242.8" fill="#bfaaa2"/><polygon points="1249.8,224.0 1251.6,224.0 1251.6,243.0 1249.8,242.9" fill="#bfaaa2"/><polygon points="1246.6,217.1 1252.2,217.0 1252.2,221.2 1246.6,221.2" fill="#9aa6ad"/><polygon points="1245.8,254.5 1253.1,255.0 1253.1,292.3 1245.8,291.3" fill="#2c3032" stroke="#3a2218" stroke-width="0.3"/><polygon points="1247.2,267.2 1249.0,267.3 1249.0,284.8 1247.2,284.6" fill="#bfaaa2"/><polygon points="1249.8,267.4 1251.6,267.5 1251.6,285.1 1249.8,284.9" fill="#bfaaa2"/><polygon points="1246.6,260.2 1252.2,260.6 1252.2,264.8 1246.6,264.3" fill="#9aa6ad"/><polygon points="1259.4,152.7 1276.0,150.3 1276.0,204.8 1259.4,205.4" fill="#2c3032" stroke="#3a2218" stroke-width="0.3"/><polygon points="1262.6,179.5 1266.5,179.1 1266.5,197.9 1262.6,198.1" fill="#bfaaa2"/><polygon points="1268.5,179.0 1272.6,178.6 1272.6,197.6 1268.5,197.8" fill="#bfaaa2"/><polygon points="1261.3,172.5 1273.9,171.1 1273.9,175.5 1261.3,176.7" fill="#9aa6ad"/><polygon points="1259.4,211.1 1276.0,210.7 1276.0,251.2 1259.4,250.4" fill="#2c3032" stroke="#3a2218" stroke-width="0.3"/><polygon points="1262.6,224.0 1266.5,224.0 1266.5,243.5 1262.6,243.3" fill="#bfaaa2"/><polygon points="1268.5,224.0 1272.6,223.9 1272.6,243.7 1268.5,243.6" fill="#bfaaa2"/><polygon points="1261.3,216.8 1273.9,216.6 1273.9,221.0 1261.3,221.1" fill="#9aa6ad"/><polygon points="1259.4,255.4 1276.0,256.3 1276.0,295.4 1259.4,293.1" fill="#2c3032" stroke="#3a2218" stroke-width="0.3"/><polygon points="1262.6,268.5 1266.5,268.8 1266.5,286.9 1262.6,286.4" fill="#bfaaa2"/><polygon points="1268.5,269.0 1272.6,269.3 1272.6,287.6 1268.5,287.1" fill="#bfaaa2"/><polygon points="1261.3,261.2 1273.9,262.1 1273.9,266.5 1261.3,265.5" fill="#9aa6ad"/><polygon points="1295.7,147.5 1314.3,144.9 1314.3,203.3 1295.7,204.0" fill="#2c3032" stroke="#3a2218" stroke-width="0.3"/><polygon points="1299.3,176.2 1303.7,175.8 1303.7,196.0 1299.3,196.2" fill="#bfaaa2"/><polygon points="1305.9,175.6 1310.5,175.2 1310.5,195.6 1305.9,195.9" fill="#bfaaa2"/><polygon points="1297.8,168.7 1312.0,167.2 1312.0,171.9 1297.8,173.3" fill="#9aa6ad"/><polygon points="1295.7,210.1 1314.3,209.6 1314.3,253.1 1295.7,252.1" fill="#2c3032" stroke="#3a2218" stroke-width="0.3"/><polygon points="1299.3,223.9 1303.7,223.9 1303.7,244.8 1299.3,244.6" fill="#bfaaa2"/><polygon points="1305.9,223.9 1310.5,223.9 1310.5,245.0 1305.9,244.9" fill="#bfaaa2"/><polygon points="1297.8,216.2 1312.0,216.0 1312.0,220.7 1297.8,220.8" fill="#9aa6ad"/><polygon points="1295.7,257.5 1314.3,258.6 1314.3,300.5 1295.7,298.0" fill="#2c3032" stroke="#3a2218" stroke-width="0.3"/><polygon points="1299.3,271.5 1303.7,271.9 1303.7,291.3 1299.3,290.8" fill="#bfaaa2"/><polygon points="1305.9,272.1 1310.5,272.5 1310.5,292.1 1305.9,291.6" fill="#bfaaa2"/><polygon points="1297.8,263.8 1312.0,264.8 1312.0,269.5 1297.8,268.4" fill="#9aa6ad"/><polygon points="1323.8,143.5 1335.3,141.9 1335.3,202.5 1323.8,202.9" fill="#2c3032" stroke="#3a2218" stroke-width="0.3"/><polygon points="1326.1,173.8 1328.8,173.6 1328.8,194.6 1326.1,194.8" fill="#bfaaa2"/><polygon points="1330.2,173.5 1333.0,173.2 1333.0,194.4 1330.2,194.6" fill="#bfaaa2"/><polygon points="1325.2,165.9 1333.9,165.0 1333.9,169.9 1325.2,170.7" fill="#9aa6ad"/><polygon points="1323.8,209.4 1335.3,209.0 1335.3,254.1 1323.8,253.5" fill="#2c3032" stroke="#3a2218" stroke-width="0.3"/><polygon points="1326.1,223.8 1328.8,223.8 1328.8,245.7 1326.1,245.6" fill="#bfaaa2"/><polygon points="1330.2,223.8 1333.0,223.8 1333.0,245.8 1330.2,245.7" fill="#bfaaa2"/><polygon points="1325.2,215.8 1333.9,215.6 1333.9,220.5 1325.2,220.6" fill="#9aa6ad"/><polygon points="1323.8,259.2 1335.3,259.8 1335.3,303.3 1323.8,301.7" fill="#2c3032" stroke="#3a2218" stroke-width="0.3"/><polygon points="1326.1,273.8 1328.8,274.0 1328.8,294.3 1326.1,294.0" fill="#bfaaa2"/><polygon points="1330.2,274.1 1333.0,274.4 1333.0,294.8 1330.2,294.4" fill="#bfaaa2"/><polygon points="1325.2,265.7 1333.9,266.3 1333.9,271.2 1325.2,270.5" fill="#9aa6ad"/><line x1="1348.0" y1="140.0" x2="1348.0" y2="307.5" stroke="#3a2218" stroke-width="0.5"/><polygon points="1053.5,213.0 1352.0,201.0 1352.0,208.6 1053.5,216.8" fill="#f4f4ec" stroke="#3a2218" stroke-width="0.5"/><polygon points="1053.5,239.8 1352.0,254.1 1352.0,260.8 1053.5,243.2" fill="#f4f4ec" stroke="#3a2218" stroke-width="0.5"/><polygon points="1352.0,202.8 1396.0,204.4 1396.0,210.7 1352.0,209.0" fill="#f4f4ec" stroke="#3a2218" stroke-width="0.5"/><polygon points="1352.0,254.0 1380.0,250.0 1380.0,255.0 1352.0,258.5" fill="#f4f4ec" stroke="#3a2218" stroke-width="0.5"/><polygon points="1085.0,242.0 1110.0,240.0 1110.0,246.0 1085.0,248.0" fill="#3a3d40"/><polygon points="1067.0,278.0 1075.0,268.6 1094.5,267.0 1096.0,274.0" fill="#6b6e70"/><polygon points="1386.0,316.0 1405.0,286.0 1421.5,287.7 1408.0,319.0" fill="#77797b"/></svg>

<!-- COLLISIONS PANEL -->
<div class="a" style="left:941px;top:424px;width:846px;height:37px;background:#545454;border-radius:3px 3px 0 0"></div>
<div class="t" id="tx_coll" style="left:985px;top:438px;font-size:14px;color:#e0e0e0;letter-spacing:0.2px">Коллизии (количество: 0)</div>
<div class="a" style="left:1364px;top:430px;width:42px;height:2px;background:#3d96b8"></div>
<div class="a" style="left:941px;top:461px;width:846px;height:31px;background:#666"></div>
<div class="a" style="left:941px;top:461px;width:60px;height:31px;background:#fff;border-bottom:1px solid #ddd"></div>
<div class="a" style="left:1091px;top:461px;width:1px;height:31px;background:#555"></div>
<div class="a" style="left:1377px;top:461px;width:1px;height:31px;background:#555"></div>
<div class="a" style="left:1569px;top:461px;width:1px;height:31px;background:#555"></div>
<div class="t" id="tx_st" style="left:1018px;top:471px;font-size:12px;font-weight:bold;color:#e8e8e8;letter-spacing:-0.15px">Статус</div>
<div class="t" id="tx_ea" style="left:1108px;top:471px;font-size:12px;font-weight:bold;color:#e8e8e8;letter-spacing:-0.26px">Элемент (Модель А)</div>
<div class="t" id="tx_eb" style="left:1394px;top:471px;font-size:12px;font-weight:bold;color:#e8e8e8;letter-spacing:-0.29px">Элемент (Модель В)</div>
<div class="t" id="tx_guid" style="left:1586px;top:471px;font-size:12px;font-weight:bold;color:#e8e8e8;letter-spacing:-0.31px">GUID элемента (Модель А)</div>
<div class="a" style="left:941px;top:492px;width:846px;height:310px;background:#fff"></div>
<div class="t" id="tx_nodata" style="left:1610px;top:501.5px;font-size:14px;color:#999">Отсутствуют данные</div>
<div class="a" style="left:941px;top:802px;width:846px;height:9px;background:#666"></div>
<div class="a" style="left:941px;top:802px;width:438px;height:9px;background:#3d96b8"></div>
<div class="a" style="left:959px;top:469px;width:15px;height:15px;border:2px solid #3d96b8;border-radius:2px"></div>

<!-- RIGHT TOOLBAR -->
<div class="a" style="left:1795px;top:36px;width:36px;height:773px;background:#555"></div>
<div class="a" style="left:1795px;top:128px;width:36px;height:1px;background:#3e3e3e"></div>
<div class="a" style="left:1795px;top:397px;width:36px;height:1px;background:#3e3e3e"></div>
<div class="a" style="left:1795px;top:446px;width:36px;height:1px;background:#3e3e3e"></div>
<div class="a" style="left:1795px;top:627px;width:36px;height:1px;background:#3e3e3e"></div>
<div class="a" style="left:1795px;top:720px;width:36px;height:1px;background:#3e3e3e"></div>
<div class="a" style="left:1797px;top:636px;width:32px;height:32px;background:#8e8e8e"></div>
<div class="a" style="left:1797px;top:680px;width:32px;height:32px;background:#8e8e8e"></div>
<div class="a" style="left:1831px;top:0;width:4px;height:814px;background:#000"></div>

<svg width="1835" height="814" style="left:0;top:0" viewBox="0 0 1835 814" fill="none" stroke-linecap="round" stroke-linejoin="round">
<!-- ===== LEFT SIDEBAR ICONS ===== -->
<g transform="translate(4,36)" stroke="#e0e0e0" fill="none">
  <rect x="8" y="9" width="12" height="6" rx="3" fill="#e0e0e0" stroke="none"/>
  <path d="M19 12 H22 Q24 12 24 14 V36 H28.5 M24 16 H28.5 M24 26 H28.5" stroke-width="2" stroke-linecap="butt"/>
  <rect x="31" y="14" width="9" height="4" rx="2" fill="#e0e0e0" stroke="none"/>
  <rect x="31" y="24" width="9" height="4" rx="2" fill="#e0e0e0" stroke="none"/>
  <rect x="31" y="34" width="9" height="4" rx="2" fill="#e0e0e0" stroke="none"/>
</g>
<g transform="translate(4,86)" fill="#e0e0e0">
  <circle cx="19" cy="16" r="3.2"/><circle cx="19" cy="31" r="3.2"/><circle cx="28.8" cy="26.8" r="3.2"/>
  <path d="M19 16 V31 M19.5 18 Q23 24 28 27" stroke="#e0e0e0" stroke-width="2" fill="none"/>
</g>
<g transform="translate(4,136)" stroke="#e6e6e6" stroke-width="2" fill="none">
  <path d="M10.5 14.2 C17 14.2 19 16 23.5 22.7 C28 29.5 30 31.2 39 31.2"/>
  <path d="M10.5 31.2 C17 31.2 19 29.5 23.5 22.7 C28 16 30 14.2 39 14.2"/>
  <path d="M31 8.5 Q35 12 39.5 14.2 Q35 16 31 20"/>
  <path d="M31 25.4 Q35 29 39.5 31.2 Q35 33 31 37"/>
</g>
<g transform="translate(4,186)" stroke="#e0e0e0" stroke-width="2.4" fill="none">
  <path d="M16 14 Q23 13 30 14 M16 14 L25 23 L16 32 Q23 31 30 32"/>
</g>
<g transform="translate(4,236)" stroke="#e0e0e0" fill="none">
  <path d="M12 14.5 Q19 13.5 26 14.5 M12 14.5 L21 23.5 L12 32.5 Q19 31.5 26 32.5" stroke-width="2.4"/>
  <path d="M28.2 23.9 H37.8 M33 19 V28.8" stroke-width="2" stroke-linecap="butt"/>
</g>
<g transform="translate(4,286)" stroke="#e0e0e0" fill="none">
  <path d="M12 10 Q24 8.5 36 10.2 Q34 17 34 24 V36.8 H12 Z" stroke-width="2"/>
  <path d="M25 34 Q26 32 28 32 H33" stroke-width="1.5"/>
  <text x="16" y="26.8" font-family="Liberation Sans" font-size="11" fill="#e0e0e0" stroke="none">2D</text>
</g>
<g transform="translate(4,336)" stroke="#e0e0e0" stroke-width="1.6" fill="none">
  <rect x="20.3" y="9" width="7.2" height="9.6" rx="1"/>
  <rect x="9.2" y="28.6" width="7.3" height="10" rx="1"/>
  <rect x="20.3" y="28.6" width="7.2" height="10" rx="1"/>
  <rect x="31.5" y="28.6" width="7.3" height="10" rx="1"/>
  <path d="M24 18.6 V28.6 M12.8 28.6 V23.9 H35.2 V28.6"/>
</g>
<g transform="translate(4,386)" stroke="#e0e0e0" stroke-width="2" fill="none">
  <path d="M12.5 16 Q16 11.5 18.8 10.6 Q20.5 10.5 25.5 18.6 Q29 14 36.8 9"/>
  <path d="M12 24.3 Q14 21.5 16 22 Q18 23 21.5 28.8 Q27 25 35.8 23.8"/>
  <path d="M12 36 H36" stroke-linecap="butt"/>
</g>
<g transform="translate(4,436)" stroke="#e0e0e0" stroke-width="2" fill="none">
  <path d="M14.5 13.5 H20.2 V11.5 A2.7 2.7 0 0 1 25.6 11.5 V13.5 H31 A2.5 2.5 0 0 1 33.5 16 V21.6 H35.8 A2.6 2.6 0 0 1 35.8 27 H33.5 V33.5 A2.5 2.5 0 0 1 31 36 H25.6 V34 A2.7 2.7 0 0 0 20.2 34 V36 H14 A2.5 2.5 0 0 1 11.5 33.5 V28 H13 A2.8 2.8 0 0 0 13 22.4 H11.5 V16 A2.5 2.5 0 0 1 14.5 13.5 Z"/>
</g>
<g transform="translate(4,486)" stroke="#e0e0e0" fill="none">
  <circle cx="23.6" cy="16.3" r="5.7" stroke-width="1.6"/>
  <path d="M22.7 33 H11.8 Q11.5 27 17 24.3 Q23.5 21 30 24.5 Q32.8 26.5 34 29.5" stroke-width="1.6"/>
  <path d="M28 31.8 L32 38.5 L39.3 29.5" stroke-width="2.6"/>
</g>
<g transform="translate(4,536)" stroke="#e0e0e0" stroke-width="1.7" fill="none">
  <path d="M9 14.5 Q9 13.5 11 13.5 H18.5 L20.5 17 H30.5 Q31.5 17 32 18.5 L35 34.5 H14.5 Q13.5 34.5 13 33 Z"/>
  <path d="M34 25.8 H38.5 Q39.7 26 39.2 27.5 L34.5 34.3"/>
  <path d="M21 26.5 H34 M25.7 22.3 L21 26.5 L25.7 30.7"/>
</g>
<g transform="translate(4,586)" stroke="#e0e0e0" stroke-width="1.6" fill="none">
  <circle cx="18.5" cy="15.8" r="5.3"/>
  <path d="M27 30.2 H9 Q9 25 13.5 22.5 Q18.5 19.8 23 22 Q24 22.7 24.8 23.5"/>
  <path d="M32.6 37.3 Q27 32 27 27.8 A5.6 5.6 0 0 1 38.2 27.8 Q38.2 32 32.6 37.3 Z"/>
  <circle cx="32.6" cy="28" r="1.3" fill="#e0e0e0" stroke="none"/>
</g>
<g transform="translate(4,636)" stroke="#e0e0e0" fill="none">
  <circle cx="23.9" cy="21.6" r="13" stroke-width="2"/>
  <path d="M15.2 21.5 A9.2 9.2 0 0 1 32.8 21.5" stroke-width="1.3" stroke-dasharray="1.5 2"/>
  <path d="M21 26.3 L25.6 15 L25.7 27 Z" fill="#e0e0e0" stroke-width="1"/>
  <path d="M9 38.9 H39 M23 34.5 V38.5" stroke-width="2" stroke-linecap="butt"/>
</g>

<!-- ===== TOP BAR ICONS ===== -->
<g stroke="#e6e6e6" stroke-width="2" fill="none">
  <rect x="350" y="6.5" width="18.5" height="12.8" rx="1.5"/>
  <path d="M355.8 6.5 V3.2 H362.4 V6.5 M350 11.5 H368.5"/>
  <rect x="357" y="11.5" width="4.2" height="3" fill="#e6e6e6" stroke="none"/>
</g>
<g fill="#e6e6e6">
  <circle cx="393" cy="6.8" r="2.2" stroke="#e6e6e6" stroke-width="1.6" fill="none"/>
  <circle cx="384.9" cy="10.9" r="2"/>
  <circle cx="401" cy="10.9" r="2"/>
  <path d="M388 19.4 V14.5 Q388 12 390.5 12 H395.5 Q398 12 398 14.5 V19.4 Z" stroke="#e6e6e6" stroke-width="2" fill="none"/>
  <path d="M381 19.8 V16.5 Q381 14.4 383 14.2 H386 V19.8 Z"/>
  <path d="M405 19.8 V16.5 Q405 14.4 403 14.2 H400 V19.8 Z"/>
</g>
<g stroke="#e6e6e6" stroke-width="1.8" fill="none">
  <path d="M425.5 20 Q418.5 16 418.5 9 V6 L425.5 3 L432.5 6 V11.5"/>
  <circle cx="432" cy="17.2" r="5.2"/>
  <circle cx="432" cy="15.6" r="1.2" fill="#e6e6e6" stroke="none"/>
  <path d="M429.7 19.3 Q432 17.5 434.3 19.3" stroke-width="1.2"/>
</g>
<path d="M627.5 9.5 H638 L632.7 14.5 Z" fill="#f0f0f0"/>
<g transform="translate(1097.5,11.9)" stroke="#eaeaea" stroke-width="1.9" fill="none">
  <path d="M-1.8 -9.3 H1.8 L2.5 -6.6 L4.6 -5.4 L7.2 -6.3 L9 -3.2 L6.9 -1.3 V1.3 L9 3.2 L7.2 6.3 L4.6 5.4 L2.5 6.6 L1.8 9.3 H-1.8 L-2.5 6.6 L-4.6 5.4 L-7.2 6.3 L-9 3.2 L-6.9 1.3 V-1.3 L-9 -3.2 L-7.2 -6.3 L-4.6 -5.4 L-2.5 -6.6 Z"/>
  <circle r="3.3"/>
</g>
<path d="M1124.8 19.3 Q1127 12.6 1136 12.4 V17.8 L1142.5 11.8 L1136 5.5 V10 Q1128.5 10.5 1124.8 19.3 Z" fill="#7a7a7a" stroke="#ececec" stroke-width="1.6" stroke-linejoin="round"/>
<g stroke="#e6e6e6" stroke-width="2" fill="none">
  <circle cx="1668.8" cy="9.4" r="5.6"/>
  <path d="M1672.8 13.4 L1679.4 20.2"/>
</g>
<g fill="#e6e6e6">
  <circle cx="1731.5" cy="5.5" r="1.4"/><circle cx="1731.5" cy="11.6" r="1.4"/><circle cx="1731.5" cy="17.6" r="1.4"/>
  <rect x="1734.7" y="4.5" width="14" height="2"/><rect x="1734.7" y="10.6" width="14" height="2"/><rect x="1734.7" y="16.6" width="14" height="2"/>
</g>
<g stroke="#e6e6e6" stroke-width="1.8" fill="none">
  <path d="M1779 7 A8 8 0 1 0 1778.5 16.5"/>
  <path d="M1776.8 12.5 H1782 L1779.4 15.3 Z" fill="#e6e6e6" stroke-width="1"/>
  <path d="M1767 16 Q1768.5 14.5 1768.5 11 Q1768.5 7 1771.5 6.5 Q1774.5 7 1774.5 11 Q1774.5 14.5 1776 16 Z" fill="#e6e6e6" stroke="none"/>
  <circle cx="1771.5" cy="17" r="0.9" fill="#e6e6e6" stroke="none"/>
</g>
<rect x="1798" y="3" width="18" height="18.2" rx="1.5" fill="#e6e6e6"/>
<circle cx="1806.8" cy="9.2" r="3" fill="#555"/>
<path d="M1801 17.5 Q1801.5 14 1806.8 14 Q1812 14 1812.6 17.5 Z" fill="#555"/>

<!-- ===== PANEL ICONS ===== -->
<g stroke="#eeeeee" stroke-width="2" fill="none" stroke-linecap="butt">
  <path d="M71 58 H84 M71 62.5 H84 M71 67 H79.5"/>
</g>
<path d="M82 66 L86.8 69 L82 72 Z" fill="#eeeeee"/>
<g stroke="#f0f0f0" stroke-width="1.7" stroke-linecap="butt">
  <path d="M896.5 57.5 L909.5 70.5 M909.5 57.5 L896.5 70.5"/>
</g>
<path d="M464.8 101 H474.6 L469.7 106 Z" fill="#eeeeee"/>
<path d="M901.5 101 H910.8 L906.2 106 Z" fill="#eeeeee"/>
<path d="M900.8 476.5 H910.3 L905.5 471.5 Z" fill="#eeeeee"/>
<path d="M900.8 509 H910.3 L905.5 514 Z" fill="#eeeeee"/>
<g transform="translate(881.8,103.5)" stroke="#eaeaea" stroke-width="1.9" fill="none">
  <path d="M-1.8 -9.3 H1.8 L2.5 -6.6 L4.6 -5.4 L7.2 -6.3 L9 -3.2 L6.9 -1.3 V1.3 L9 3.2 L7.2 6.3 L4.6 5.4 L2.5 6.6 L1.8 9.3 H-1.8 L-2.5 6.6 L-4.6 5.4 L-7.2 6.3 L-9 3.2 L-6.9 1.3 V-1.3 L-9 -3.2 L-7.2 -6.3 L-4.6 -5.4 L-2.5 -6.6 Z"/>
  <circle r="3.3"/>
</g>
<!-- tree controls -->
<g stroke="#3d8eb0" stroke-width="1.4" fill="none">
  <path d="M73.5 134.5 L76 131.5 L78.5 134.5 M73.5 139.5 L76 142.5 L78.5 139.5"/>
  <path d="M451.5 137.5 L454.5 141 L460.5 133.5 M455.5 138.5 L457.5 141 L465.5 132.5"/>
</g>
<path d="M74.5 157.5 H81.5 L78 161.5 Z" fill="#777"/>
<path d="M74.5 205.5 H81.5 L78 209.5 Z" fill="#777"/>
<path d="M85 179.5 V186.5 L88.5 183 Z" fill="#777"/>
<!-- badges -->
<g>
  <rect x="408.3" y="152" width="45.5" height="14" rx="4" fill="#efefef"/>
  <rect x="408.3" y="176" width="45.5" height="14" rx="4" fill="#efefef"/>
  <rect x="408.3" y="200" width="45.5" height="14" rx="4" fill="#efefef"/>
  <rect x="408.3" y="224" width="45.5" height="14" rx="4" fill="#dde7ea"/>
  <rect x="408.3" y="248" width="45.5" height="14" rx="4" fill="#efefef"/>
  <g font-family="Liberation Sans" font-size="9.3" fill="#333">
    <text x="412" y="163">SHARED</text><text x="412" y="187">SHARED</text><text x="412" y="211">SHARED</text><text x="412" y="235">SHARED</text><text x="412" y="259">SHARED</text>
  </g>
  <rect x="458" y="153" width="12.5" height="12.5" rx="1.5" fill="#3d8eb0"/>
  <rect x="458" y="177" width="12.5" height="12.5" rx="1.5" fill="#3d8eb0"/>
  <path d="M460.5 159.5 L463 162.5 L468.3 156 M460.5 183.5 L463 186.5 L468.3 180" stroke="#fff" stroke-width="1.5" fill="none"/>
  <rect x="458.7" y="201.7" width="11" height="11" rx="1.5" fill="none" stroke="#666" stroke-width="1.3"/>
  <rect x="458.7" y="225.7" width="11" height="11" rx="1.5" fill="none" stroke="#777" stroke-width="1.3"/>
  <rect x="458.7" y="249.7" width="11" height="11" rx="1.5" fill="none" stroke="#888" stroke-width="1.3"/>
</g>
<!-- middle panel icons -->
<path transform="translate(851,153.8) scale(1.017)" fill="#3d8eb0" fill-rule="evenodd" d="M12 4.5C7 4.5 2.73 7.61 1 12c1.73 4.39 6 7.5 11 7.5s9.27-3.11 11-7.5c-1.73-4.39-6-7.5-11-7.5zM12 17c-2.76 0-5-2.240-5-5s2.24-5 5-5 5 2.24 5 5-2.24 5-5 5zm0-8c-1.66 0-3 1.34-3 3s1.34 3 3 3 3-1.34 3-3-1.34-3-3-3z"/>
<g fill="#111">
  <circle cx="895.5" cy="160" r="2.1"/><circle cx="895.5" cy="166" r="2.1"/><circle cx="895.5" cy="172" r="2.1"/>
  <circle cx="895.5" cy="228" r="2.1"/><circle cx="895.5" cy="234" r="2.1"/><circle cx="895.5" cy="240" r="2.1"/>
</g>
<g stroke="#111" stroke-width="1.6" fill="none">
  <rect x="514.3" y="260.5" width="15.6" height="15.3" rx="2"/>
  <path d="M522.1 263.5 V272.8 M517.4 268.1 H526.8" stroke-width="1.7"/>
  <rect x="542" y="260.5" width="15.6" height="15.3" rx="2"/>
</g>
<path d="M545.5 263 H551.8 L554.5 265.7 V273.3 H545.5 Z" fill="#111"/>
<path d="M547.5 266 L552 272 M552 266 L547.5 272" stroke="#fff" stroke-width="0.9"/>
<!-- reset icon -->
<g stroke="#3d8eb0" stroke-width="1.4" fill="none">
  <path d="M874 549.5 L877 553 L882.5 546 M877.5 550.5 L879.5 553 L887.5 544.5 M875.5 544.5 L889 556"/>
</g>
<!-- collision header icons -->
<g stroke="#eeeeee" stroke-width="2" fill="none" stroke-linecap="butt">
  <path d="M955 438.5 H968.5 M955 443 H968.5 M955 447.5 H964"/>
</g>
<path d="M966 446.5 L970.6 449.3 L966 452 Z" fill="#eeeeee"/>
<g stroke="#e6e6e6" stroke-width="1.7" fill="none">
  <path d="M1629 440.7 V437 Q1629 435.3 1627.3 435.3 H1619 Q1617.3 435.3 1617.3 437 V445.3 Q1617.3 447 1619 447 H1629"/>
  <path d="M1622.2 447 V450.6 Q1622.2 452.3 1624 452.3 H1632.7 Q1634.4 452.3 1634.4 450.6 V442.4 Q1634.4 440.7 1632.7 440.7 H1622.2"/>
  <path d="M1654 437.8 H1668 M1654 453 H1668 M1661 441 V450" stroke-width="1.8" stroke-linecap="butt"/>
  <path d="M1658.2 442.5 L1661 439.3 L1663.8 442.5 Z M1658.2 448.4 L1661 451.6 L1663.8 448.4 Z" fill="#e6e6e6" stroke="none"/>
  <path d="M1688 445.1 H1702" stroke-width="3" stroke-linecap="butt"/>
  <path d="M1695 435.8 V440.5 M1695 449.5 V454" stroke-width="1.6" stroke-linecap="butt"/>
  <path d="M1692.3 439.8 L1695 443 L1697.7 439.8 Z M1692.3 450.3 L1695 447.2 L1697.7 450.3 Z" fill="#e6e6e6" stroke="none"/>
  <path d="M1758.2 443 L1763 447.8 L1767.8 443" stroke-width="1.6"/>
</g>
<g transform="translate(1729.1,445)">
  <path d="M-1.8 -8.5 H1.8 L2.4 -6 L4.3 -5 L6.7 -5.9 L8.5 -2.9 L6.5 -1.2 V1.2 L8.5 2.9 L6.7 5.9 L4.3 5 L2.4 6 L1.8 8.5 H-1.8 L-2.4 6 L-4.3 5 L-6.7 5.9 L-8.5 2.9 L-6.5 1.2 V-1.2 L-8.5 -2.9 L-6.7 -5.9 L-4.3 -5 L-2.4 -6 Z" fill="#e6e6e6"/>
  <circle r="2.8" fill="#545454"/>
</g>
<!-- 3D view button -->
<g stroke="#e6e6e6" stroke-width="1.4" fill="none" stroke-linecap="butt">
  <path d="M945.2 48 V40.2 H953.1 M961 40.2 H968.8 V48 M968.8 56 V63.7 H961 M953.1 63.7 H945.2 V56"/>
</g>
<path d="M957 45.2 L963 48.6 V55.3 L957 58.7 L951 55.3 V48.6 Z" fill="#e0e0e0"/>
<!-- help -->

<!-- ===== RIGHT TOOLBAR ICONS ===== -->
<g transform="translate(1793,36)" stroke="#e0e0e0" stroke-width="1.5" fill="none">
  <path d="M15.5 28.8 H13 Q8.5 28.5 8.5 23.5 Q8.8 18.5 14.8 18.5 Q15 12.7 20.3 12.7 Q25.8 12.7 26.5 18.5 Q31.7 19.5 31.7 24 Q31.5 28.8 26.5 28.8 H24.5"/>
  <path d="M20.3 17.8 V35 M15 22.5 L20.3 26 M23.7 21 L20.3 23.3 M25 25.3 L20.3 28.5"/>
</g>
<g transform="translate(1793,80)" stroke="#e0e0e0" stroke-width="1.5" fill="none" stroke-linecap="butt">
  <path d="M30.4 18.6 V11.4 H7.5 V28.6 H15.5 V31 H12"/>
  <path d="M17.3 25.5 V20.4 H22.5 M27.5 20.4 H32.6 V25.5 M32.6 31.5 V36.6 H27.5 M22.5 36.6 H17.3 V31.5"/>
</g>
<path d="M1818 104.2 L1822.2 106.6 V111.4 L1818 113.8 L1813.8 111.4 V106.6 Z" fill="#e0e0e0"/>
<g transform="translate(1793,130)" stroke="#e0e0e0" fill="none">
  <rect x="7.5" y="18.2" width="25" height="8" stroke-width="1.5"/>
  <path d="M11.5 26 V22.5 M14 26 V24.5 M16.5 26 V22.5 M19 26 V24.5 M21.5 26 V22.5 M24 26 V24.5 M27 26 V22.5 M29.5 26 V24.5" stroke-width="1.2"/>
  <path d="M7.2 29 H32.8" stroke-width="2"/>
</g>
<g transform="translate(1793,174)">
  <path d="M15 17 L24.8 9 V27.3 L15 36.9 Z" fill="#e0e0e0"/>
  <path d="M6.4 25.5 L14.5 19.3 H33.5 L25.3 25.5 Z" stroke="#e0e0e0" stroke-width="1.4" fill="none"/>
  <path d="M15 20.5 H24.8 V24.2 H15 Z" fill="#555"/>
</g>
<g transform="translate(1793,218)" stroke="#e0e0e0" stroke-width="1.3" fill="none">
  <rect x="8.3" y="17" width="16.5" height="16.5"/>
  <rect x="15.5" y="12.1" width="16.2" height="16"/>
  <path d="M8.3 17 L15.5 12.1 M24.8 17 L31.7 12.1 M8.3 33.5 L15.5 28.1 M24.8 33.5 L31.7 28.1"/>
  <path d="M17.3 33.5 V17 L22.7 13 V29 Z" fill="#e0e0e0" stroke="none"/>
</g>
<g transform="translate(1793,262)" stroke="#e0e0e0" fill="none">
  <path d="M6.5 16 L10 12.5 H31.3 V31.3 H6.5 Z" stroke-width="1.5"/>
  <path d="M8 32.5 V33.5 H33.8 V14.2 H32.3" stroke-width="1.5"/>
  <path d="M7.5 21.5 H31 M18.5 13 V31" stroke-width="1.2" stroke-dasharray="2 1.5"/>
  <path d="M24.5 31 V28.2 H31" stroke-width="1.2"/>
</g>
<g transform="translate(1793,306)" fill="none" stroke="#e0e0e0">
  <circle cx="19.9" cy="23" r="7.8" stroke-width="2"/>
  <circle cx="19.9" cy="23" r="4" fill="#e0e0e0" stroke="none"/>
  <path d="M19.9 12.5 V14.8 M19.9 31.2 V33.5 M9.2 23 H11.6 M28.2 23 H30.5" stroke-width="2" stroke-linecap="butt"/>
</g>
<g transform="translate(1793,350)" fill="none" stroke="#e0e0e0" stroke-width="1.2">
  <circle cx="19.9" cy="22.7" r="12.6"/>
  <path d="M14.4 29.9 V16.3 H21.5 L23 18.5 H27.7 V25.3 H21.5 L20 23 H14.4"/>
</g>
<g transform="translate(1793,396)" stroke="#e0e0e0" stroke-width="1.1" fill="none">
  <path d="M5.2 29.9 L35.1 13.3 M5.2 39.5 L35.1 23.5 M6.2 24.3 L24.8 35.3 M15 18.1 L33.8 28.6"/>
  <text x="5" y="22.2" font-family="Liberation Sans" font-size="5.5" font-weight="bold" fill="#e0e0e0" stroke="none">1</text>
  <text x="14.8" y="15.8" font-family="Liberation Sans" font-size="5.5" font-weight="bold" fill="#e0e0e0" stroke="none">2</text>
</g>
<g transform="translate(1793,444)" fill="none" stroke="#e0e0e0">
  <rect x="8.3" y="15.4" width="23.5" height="23" stroke-width="1.3" stroke-dasharray="1.7 2.2" stroke-linecap="butt"/>
  <path d="M20 20.5 L25.8 23.5 V30.7 L20 33.7 L14.2 30.7 V23.5 Z M14.2 23.5 L20 26.7 L25.8 23.5 M20 26.7 V33.7" stroke-width="1.2"/>
</g>
<g transform="translate(1793,490)" fill="none" stroke="#e0e0e0">
  <rect x="8.3" y="13.5" width="23.5" height="23" stroke-width="1.3" stroke-dasharray="1.7 2.2" stroke-linecap="butt"/>
  <path d="M12.8 25 Q20 16.5 27.8 25 Q20 33.5 12.8 25 Z" fill="#e0e0e0" stroke="none"/>
  <circle cx="20.2" cy="25" r="2.8" stroke="#555" stroke-width="1.2"/>
</g>
<g transform="translate(1793,536)" fill="none" stroke="#e0e0e0">
  <rect x="8.3" y="11.5" width="23.5" height="23" stroke-width="1.3" stroke-dasharray="1.7 2.2" stroke-linecap="butt"/>
  <path d="M12 23 Q20 14.5 28 23 Q20 31.5 12 23 Z" fill="#e0e0e0" stroke="none"/>
  <circle cx="20" cy="23" r="2.7" stroke="#555" stroke-width="1.2"/>
  <path d="M13.3 16.3 L25.8 29.8" stroke="#555" stroke-width="2.6"/>
  <path d="M13.3 16.3 L25.8 29.8" stroke="#e0e0e0" stroke-width="1.2"/>
</g>
<g transform="translate(1793,580)" fill="none" stroke="#e0e0e0">
  <rect x="8.3" y="11.4" width="23.5" height="23" stroke-width="1.3" stroke-dasharray="1.7 2.2" stroke-linecap="butt"/>
  <rect x="18" y="20.9" width="16" height="16" fill="#e0e0e0" stroke="none"/>
  <path d="M21.8 24.5 L30 32.8 M30 24.5 L21.8 32.8" stroke="#555" stroke-width="1.2"/>
</g>
<path d="M1798 803.5 V807.5 H1802 Z" fill="#fff"/>

<!-- active cube -->
<g transform="translate(1793,624)">
  <path d="M8.5 19.1 L19.9 22 V40 L9.2 32.5 Z" fill="#e2e2e2"/>
  <path d="M19.9 22 L31 19.4 L30.2 32.5 L19.9 40 Z" fill="#8a8a8a" stroke="#e2e2e2" stroke-width="1.2"/>
  <path d="M8.5 19.1 L19.9 16.5 L31 19.4 L19.9 22 Z" fill="#7c7c7c" stroke="#e2e2e2" stroke-width="1.3"/>
</g>
<!-- orbit -->
<g transform="translate(1793,672)" fill="none" stroke="#e2e2e2">
  <ellipse cx="20" cy="24.2" rx="11.3" ry="5.3" stroke-width="1.6"/>
  <ellipse cx="20" cy="24" rx="4.9" ry="10.6" stroke-width="1.6"/>
  <path d="M20.3 21 V25.2 L17 28.5 M20.3 25.2 L23.7 28.5" stroke-width="0.8"/>
</g>
<!-- axes gizmo -->
<circle cx="991.2" cy="293.9" r="46.3" fill="#312d2c"/>
<g>
  <path d="M991 294 V273" stroke="#0a14e6" stroke-width="2.4"/>
  <path d="M991 266.5 L994.3 275 H987.7 Z" fill="#0a14e6"/>
  <path d="M991 294 H1010" stroke="#10dd10" stroke-width="2.4"/>
  <path d="M1017.5 294 L1009 290.8 V297.2 Z" fill="#10dd10"/>
  <path d="M991 294 H975" stroke="#ee1010" stroke-width="2.2"/>
  <path d="M971.5 294 L974.8 291 L978 294 L974.8 297 Z" fill="#ee1010"/>
  <path d="M968 294 H972" stroke="#ee1010" stroke-width="1.2"/>
  <circle cx="991" cy="294" r="4.4" fill="#a8a8a8"/>
  <text x="987.8" y="261" font-family="Liberation Sans" font-size="8.5" font-weight="bold" fill="#0a14e6">Z</text>
  <text x="1023.8" y="294.5" font-family="Liberation Sans" font-size="8.5" fill="#10dd10">Y</text>
  <text x="966" y="294.5" font-family="Liberation Sans" font-size="8.5" fill="#ee1010">X</text>
</g>
<!-- nav cube -->
<path d="M1681.7 83.1 L1728.1 75.7 V147.3 L1681.7 138.3 Z" fill="#fdfdfd"/>
<path d="M1729.9 76.1 L1754.3 86.6 V135.6 L1729.9 147.3 Z" fill="#fdfdfd"/>
<text transform="translate(1689.8,119.3) scale(0.4,1)" font-family="Liberation Sans" font-size="21" fill="#858585">Справа</text>
<text transform="translate(1736,119.5) scale(0.23,1)" font-family="Liberation Sans" font-size="21" fill="#8a8a8a">Сзади</text>
<!-- red arrow -->
<defs><filter id="sh" x="-50%" y="-50%" width="200%" height="200%"><feGaussianBlur stdDeviation="1.6"/></filter></defs>
<g transform="translate(3,3)" opacity="0.55" filter="url(#sh)">
  <path d="M563.5 287.5 L605.6 362.3" stroke="#333" stroke-width="3"/>
  <path d="M556.9 275.5 L570 284.4 L557.3 291 Z" fill="#333"/>
</g>
<path d="M563.5 287.5 L605.6 362.3" stroke="#c4000f" stroke-width="2.9" stroke-linecap="butt"/>
<path d="M556.9 275.5 L570 284.4 L557.3 291 Z" fill="#c4000f"/>

</svg>

</body></html>
